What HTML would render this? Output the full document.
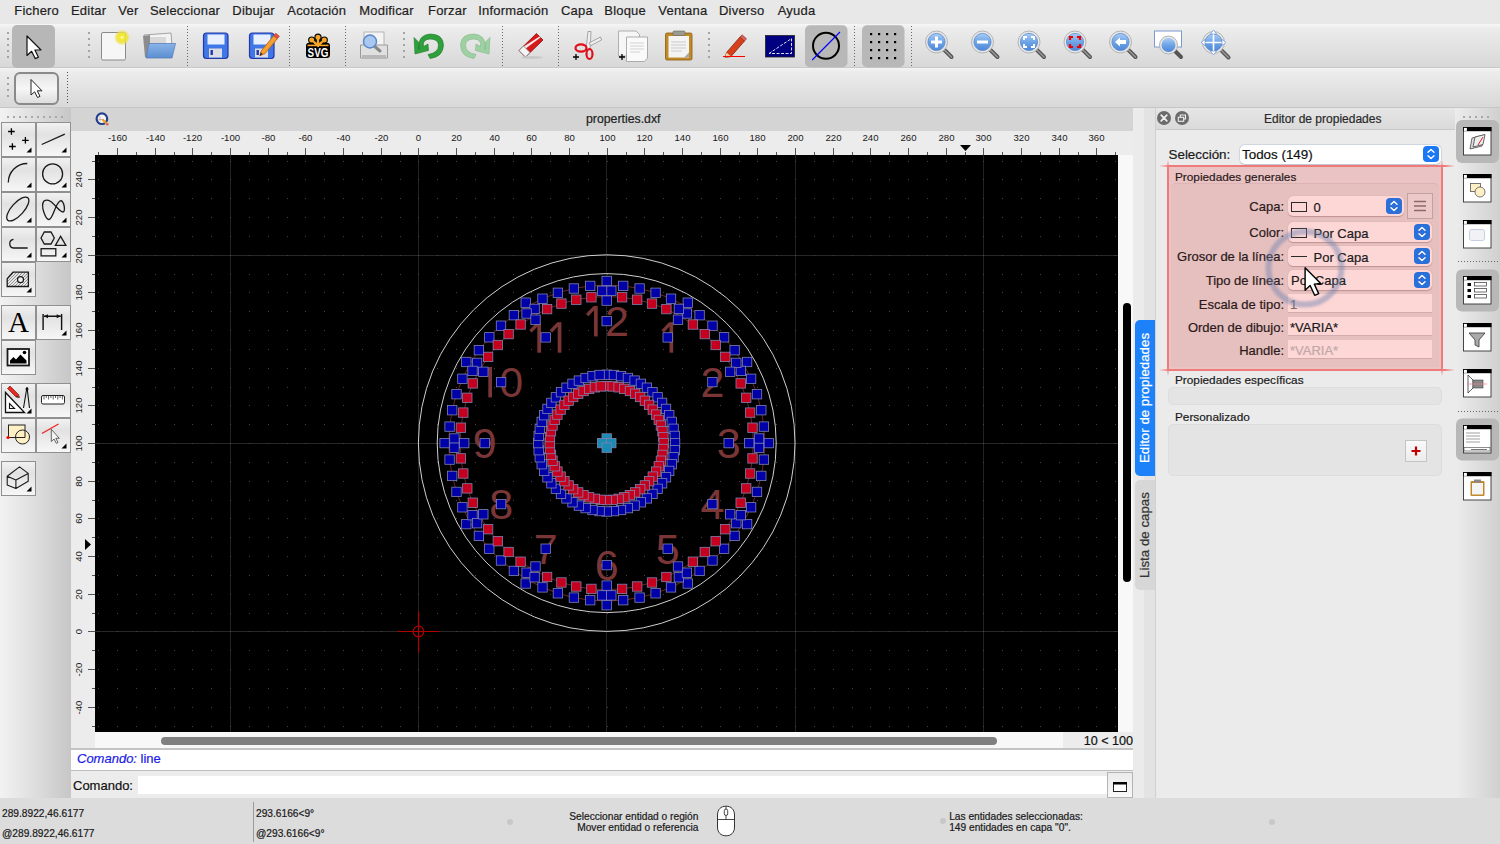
<!DOCTYPE html><html><head><meta charset="utf-8"><style>
*{box-sizing:border-box;margin:0;padding:0}
html,body{width:1500px;height:844px;overflow:hidden;background:#ececec;font-family:"Liberation Sans",sans-serif;color:#222}
.a{position:absolute}
.t{position:absolute;white-space:pre;line-height:1;-webkit-text-stroke:0.2px currentColor}
</style></head><body>
<div class="a" style="left:0;top:0;width:1500px;height:24px;background:#e8e8e8"></div>
<div class="t" style="left:14.3px;top:4px;font-size:13px;letter-spacing:0.2px;color:#1e1e1e">Fichero</div>
<div class="t" style="left:71px;top:4px;font-size:13px;letter-spacing:0.2px;color:#1e1e1e">Editar</div>
<div class="t" style="left:118.3px;top:4px;font-size:13px;letter-spacing:0.2px;color:#1e1e1e">Ver</div>
<div class="t" style="left:150px;top:4px;font-size:13px;letter-spacing:0.2px;color:#1e1e1e">Seleccionar</div>
<div class="t" style="left:232.3px;top:4px;font-size:13px;letter-spacing:0.2px;color:#1e1e1e">Dibujar</div>
<div class="t" style="left:287.3px;top:4px;font-size:13px;letter-spacing:0.2px;color:#1e1e1e">Acotación</div>
<div class="t" style="left:359.3px;top:4px;font-size:13px;letter-spacing:0.2px;color:#1e1e1e">Modificar</div>
<div class="t" style="left:428px;top:4px;font-size:13px;letter-spacing:0.2px;color:#1e1e1e">Forzar</div>
<div class="t" style="left:478.3px;top:4px;font-size:13px;letter-spacing:0.2px;color:#1e1e1e">Información</div>
<div class="t" style="left:561px;top:4px;font-size:13px;letter-spacing:0.2px;color:#1e1e1e">Capa</div>
<div class="t" style="left:604.3px;top:4px;font-size:13px;letter-spacing:0.2px;color:#1e1e1e">Bloque</div>
<div class="t" style="left:658.3px;top:4px;font-size:13px;letter-spacing:0.2px;color:#1e1e1e">Ventana</div>
<div class="t" style="left:719px;top:4px;font-size:13px;letter-spacing:0.2px;color:#1e1e1e">Diverso</div>
<div class="t" style="left:777.7px;top:4px;font-size:13px;letter-spacing:0.2px;color:#1e1e1e">Ayuda</div>
<div class="a" style="left:0;top:24px;width:1500px;height:44px;background:linear-gradient(#f6f6f6,#ececec 10%,#d8d8d8);border-bottom:1px solid #c9c9c9"></div>
<div class="a" style="left:0;top:68px;width:1500px;height:40px;background:linear-gradient(#f4f4f4,#ececec 10%,#d8d8d8);border-bottom:1px solid #c6c6c6"></div>
<svg class="a" style="left:0px;top:24px" width="1300" height="84" viewBox="0 24 1300 84"><defs><linearGradient id="lg" x1="0" y1="0" x2="0" y2="1"><stop offset="0" stop-color="#a9cdf5"/><stop offset="0.5" stop-color="#6ea4e6"/><stop offset="1" stop-color="#4d86d6"/></linearGradient><radialGradient id="glow"><stop offset="0" stop-color="#fffde0"/><stop offset="0.3" stop-color="#f4ea20"/><stop offset="0.7" stop-color="#eee040" stop-opacity="0.8"/><stop offset="1" stop-color="#eee040" stop-opacity="0"/></radialGradient><linearGradient id="fold" x1="0" y1="0" x2="0" y2="1"><stop offset="0" stop-color="#8ab4e8"/><stop offset="1" stop-color="#5a8ed0"/></linearGradient></defs><rect x="7" y="32" width="2" height="2" fill="#a4a4a4"/><rect x="7" y="38" width="2" height="2" fill="#a4a4a4"/><rect x="7" y="44" width="2" height="2" fill="#a4a4a4"/><rect x="7" y="50" width="2" height="2" fill="#a4a4a4"/><rect x="7" y="56" width="2" height="2" fill="#a4a4a4"/><rect x="12" y="25" width="43" height="43" rx="5" fill="#b7b7b7"/><path d="M27 36V55.5L31.6 51.3L35.2 58.6L38.4 57.2L34.9 50H41Z" fill="#fff" stroke="#111" stroke-width="1.2" stroke-linejoin="round"/><rect x="88" y="32" width="2" height="2" fill="#a4a4a4"/><rect x="88" y="38" width="2" height="2" fill="#a4a4a4"/><rect x="88" y="44" width="2" height="2" fill="#a4a4a4"/><rect x="88" y="50" width="2" height="2" fill="#a4a4a4"/><rect x="88" y="56" width="2" height="2" fill="#a4a4a4"/><rect x="101.5" y="32.5" width="24" height="27.5" rx="1.5" fill="#f6f6f6" stroke="#8a8a8a" stroke-width="1"/><circle cx="122" cy="37.5" r="8" fill="url(#glow)"/><path d="M144 35L171 33L172.5 53L147 56Z" fill="#f2f2f2" stroke="#909090" stroke-width="0.8"/><path d="M146 37H166V50H146Z" fill="#d8d8d8"/><path d="M143 36L150 35L150 57L145 57Z" fill="#8c8c8c"/><path d="M149 43.5H175.5L172 58H146Z" fill="url(#fold)" stroke="#5a7fb8" stroke-width="0.8"/><line x1="187.5" y1="26" x2="187.5" y2="66" stroke="#6a6a6a" stroke-width="1" stroke-dasharray="1 2"/><rect x="203.5" y="33" width="24.5" height="25.5" rx="3" fill="#3f78e6" stroke="#2436a8" stroke-width="1.2"/><rect x="207.5" y="34.5" width="17" height="10" fill="#e8f0ff"/><rect x="209.0" y="48.5" width="13" height="9" fill="#dcdce4"/><rect x="210.5" y="50" width="2.4" height="5" fill="#2436a8"/><rect x="249.5" y="33" width="24.5" height="25.5" rx="3" fill="#3f78e6" stroke="#2436a8" stroke-width="1.2"/><rect x="253.5" y="34.5" width="17" height="10" fill="#e8f0ff"/><rect x="255.0" y="48.5" width="13" height="9" fill="#dcdce4"/><rect x="256.5" y="50" width="2.4" height="5" fill="#2436a8"/><path d="M261.5 50.5L273.8 35.6L277.4 38.6L265.1 53.5L259.8 55.8Z" fill="#f5a030" stroke="#a85a18" stroke-width="0.8" stroke-linejoin="round"/><path d="M273.8 35.6L275.8 33.2L279.4 36.2L277.4 38.6Z" fill="#e85040" stroke="#a83020" stroke-width="0.6"/><path d="M259.8 55.8L260.8 52.6L262.6 54.1Z" fill="#222"/><line x1="289.5" y1="26" x2="289.5" y2="66" stroke="#6a6a6a" stroke-width="1" stroke-dasharray="1 2"/><rect x="306" y="42.8" width="24" height="15.2" rx="3.2" fill="#000"/><g stroke="#000" stroke-width="4.6" stroke-linecap="round"><line x1="318" y1="45" x2="311.7" y2="40"/><line x1="318" y1="45" x2="318" y2="37.2"/><line x1="318" y1="45" x2="324.3" y2="40"/></g><g stroke="#f6a728" stroke-width="2.2" stroke-linecap="round"><line x1="318" y1="45.5" x2="311.7" y2="40"/><line x1="318" y1="45.5" x2="318" y2="37.2"/><line x1="318" y1="45.5" x2="324.3" y2="40"/></g><g fill="#000"><circle cx="311.7" cy="40" r="3.6"/><circle cx="318" cy="37.2" r="3.6"/><circle cx="324.3" cy="40" r="3.6"/></g><g stroke="#f6a728" stroke-width="2.2" stroke-linecap="round"><line x1="318" y1="45.5" x2="311.7" y2="40"/><line x1="318" y1="45.5" x2="318" y2="37.2"/><line x1="318" y1="45.5" x2="324.3" y2="40"/></g><g fill="#f6a728"><circle cx="311.7" cy="40" r="2.5"/><circle cx="318" cy="37.2" r="2.5"/><circle cx="324.3" cy="40" r="2.5"/></g><path d="M307.5 45.4H328.5" stroke="#f6a728" stroke-width="1.6"/><text x="0" y="0" transform="translate(318 56.6) scale(0.82 1)" text-anchor="middle" style="font-family:&quot;Liberation Sans&quot;;font-weight:bold" font-size="12" fill="#fff">SVG</text><line x1="345.5" y1="26" x2="345.5" y2="66" stroke="#6a6a6a" stroke-width="1" stroke-dasharray="1 2"/><rect x="364" y="32" width="20" height="14" fill="#f4f4f4" stroke="#a8a8a8" stroke-width="0.8"/><path d="M360.5 45H387.5V58H360.5Z" fill="#e0e0e0" stroke="#9a9a9a" stroke-width="1" rx="2"/><rect x="362" y="55" width="24" height="3.5" fill="#b8b8b8"/><line x1="373" y1="45" x2="380" y2="51" stroke="#888" stroke-width="3" stroke-linecap="round"/><circle cx="370" cy="41.5" r="6.5" fill="#a8c8f0" stroke="#5a86c8" stroke-width="1.4"/><rect x="403" y="32" width="2" height="2" fill="#a4a4a4"/><rect x="403" y="38" width="2" height="2" fill="#a4a4a4"/><rect x="403" y="44" width="2" height="2" fill="#a4a4a4"/><rect x="403" y="50" width="2" height="2" fill="#a4a4a4"/><rect x="403" y="56" width="2" height="2" fill="#a4a4a4"/><path d="M419 50Q417 35 430 34Q443 34 443.5 45Q443 57 430 58.5L428 54.5Q438.5 53 438.5 45Q438 39 430 39Q422 39.5 423.5 46.5L428 44L428.5 50.5L415 54L414 37.5L418.5 42Z" fill="#2fa03c" stroke="#1e7a2a" stroke-width="0.6"/><path d="M485 50Q487 35 474 34Q461 34 460.5 45Q461 57 474 58.5L476 54.5Q465.5 53 465.5 45Q466 39 474 39Q482 39.5 480.5 46.5L476 44L475.5 50.5L489 54L490 37.5L485.5 42Z" fill="#9fd0a4" stroke="#7fb886" stroke-width="0.6"/><line x1="502.5" y1="26" x2="502.5" y2="66" stroke="#6a6a6a" stroke-width="1" stroke-dasharray="1 2"/><path d="M519 50.5L536.5 33.5L543 40L525.5 57Z" fill="#d61a1a" stroke="#8a1010" stroke-width="0.8"/><path d="M523 47L539.5 36.5L540.5 37.5L525 49Z" fill="#fff" opacity="0.9"/><path d="M519 50.5L523.5 46L530 52.5L525.5 57Z" fill="#f4f4f4" stroke="#888" stroke-width="0.8"/><ellipse cx="532" cy="57.5" rx="11" ry="1.5" fill="#c8c8c8"/><line x1="558.5" y1="26" x2="558.5" y2="66" stroke="#6a6a6a" stroke-width="1" stroke-dasharray="1 2"/><path d="M588 31.5L591 31.5L590 50L586 50Z" fill="#eee" stroke="#888" stroke-width="0.7"/><path d="M600.5 37L601.5 40L591 45.5L589 43Z" fill="#eee" stroke="#888" stroke-width="0.7"/><ellipse cx="581" cy="48" rx="5.5" ry="3.6" fill="none" stroke="#e0101a" stroke-width="2.2"/><ellipse cx="589.5" cy="54" rx="3" ry="5" fill="none" stroke="#e0101a" stroke-width="2.2"/><path d="M576 54V60M573 57H579" stroke="#000" stroke-width="1.3"/><path d="M618.5 31H636L639.5 34.5V56H618.5Z" fill="#f6f6f6" stroke="#a0a0a0" stroke-width="0.8"/><path d="M626.5 37H647.5V58L644.5 61.5H626.5Z" fill="#fafafa" stroke="#9a9a9a" stroke-width="0.8"/><path d="M630 43H644M630 46H644M630 49H644M630 52H640" stroke="#c8c8c8" stroke-width="0.8"/><path d="M622 54V60M619 57H625" stroke="#000" stroke-width="1.3"/><rect x="665.5" y="33" width="26.5" height="27" rx="1.5" fill="#c08a2a" stroke="#8a5a10" stroke-width="0.8"/><path d="M668.5 36H689V57.5H668.5Z" fill="#f4f4f4"/><path d="M671 42H686M671 45H686M671 48H686M671 51H682" stroke="#c0c0c0" stroke-width="0.8"/><path d="M684 57.5L689 52.5V57.5Z" fill="#a8a8a8"/><rect x="673" y="31" width="12" height="4.5" rx="1" fill="#9a9a90" stroke="#6a6a60" stroke-width="0.6"/><rect x="708" y="32" width="2" height="2" fill="#a4a4a4"/><rect x="708" y="38" width="2" height="2" fill="#a4a4a4"/><rect x="708" y="44" width="2" height="2" fill="#a4a4a4"/><rect x="708" y="50" width="2" height="2" fill="#a4a4a4"/><rect x="708" y="56" width="2" height="2" fill="#a4a4a4"/><path d="M726.5 52.5L740 37L744.5 41L731 56.5L725 57.5Z" fill="#d8401c" stroke="#7a2a10" stroke-width="0.8"/><path d="M740 37L742 34.8L746.5 38.8L744.5 41Z" fill="#e06060" stroke="#7a2a10" stroke-width="0.6"/><path d="M725 57.5L726.5 52.5L731 56.5Z" fill="#f0d0a0"/><line x1="723" y1="56.5" x2="745" y2="56.5" stroke="#f00" stroke-width="1"/><rect x="765.5" y="35.5" width="29" height="21.5" fill="#000080" stroke="#222" stroke-width="0.8"/><path d="M769 53.5L791.5 38.5V53.5Z" fill="none" stroke="#dde" stroke-width="1" stroke-dasharray="3 1.5"/><rect x="805" y="25.2" width="42.5" height="42" rx="5" fill="#b8b8b8"/><circle cx="826" cy="45.8" r="13" fill="none" stroke="#000" stroke-width="2"/><line x1="812.2" y1="60" x2="840" y2="32" stroke="#0000ff" stroke-width="1.1"/><line x1="854.5" y1="26" x2="854.5" y2="66" stroke="#6a6a6a" stroke-width="1" stroke-dasharray="1 2"/><rect x="862" y="25.2" width="42.5" height="42" rx="5" fill="#b8b8b8"/><rect x="870" y="33" width="2.2" height="2.2" fill="#000"/><rect x="870" y="41" width="2.2" height="2.2" fill="#000"/><rect x="870" y="49" width="2.2" height="2.2" fill="#000"/><rect x="870" y="57" width="2.2" height="2.2" fill="#000"/><rect x="878" y="33" width="2.2" height="2.2" fill="#000"/><rect x="878" y="41" width="2.2" height="2.2" fill="#000"/><rect x="878" y="49" width="2.2" height="2.2" fill="#000"/><rect x="878" y="57" width="2.2" height="2.2" fill="#000"/><rect x="886" y="33" width="2.2" height="2.2" fill="#000"/><rect x="886" y="41" width="2.2" height="2.2" fill="#000"/><rect x="886" y="49" width="2.2" height="2.2" fill="#000"/><rect x="886" y="57" width="2.2" height="2.2" fill="#000"/><rect x="894" y="33" width="2.2" height="2.2" fill="#000"/><rect x="894" y="41" width="2.2" height="2.2" fill="#000"/><rect x="894" y="49" width="2.2" height="2.2" fill="#000"/><rect x="894" y="57" width="2.2" height="2.2" fill="#000"/><line x1="911.5" y1="26" x2="911.5" y2="66" stroke="#6a6a6a" stroke-width="1" stroke-dasharray="1 2"/><line x1="943.5" y1="49" x2="951.5" y2="57" stroke="#555" stroke-width="4" stroke-linecap="round"/><line x1="943.5" y1="49" x2="951.5" y2="57" stroke="#999" stroke-width="1.5" stroke-linecap="round"/><circle cx="936.5" cy="42" r="11" fill="#e6e6e6" stroke="#b4b4b4" stroke-width="1"/><circle cx="936.5" cy="42" r="8.6" fill="url(#lg)" stroke="#5a8ad0" stroke-width="0.8"/><path d="M931 42H942M936.5 36.5V47.5" stroke="#fff" stroke-width="3"/><line x1="989.5" y1="49" x2="997.5" y2="57" stroke="#555" stroke-width="4" stroke-linecap="round"/><line x1="989.5" y1="49" x2="997.5" y2="57" stroke="#999" stroke-width="1.5" stroke-linecap="round"/><circle cx="982.5" cy="42" r="11" fill="#e6e6e6" stroke="#b4b4b4" stroke-width="1"/><circle cx="982.5" cy="42" r="8.6" fill="url(#lg)" stroke="#5a8ad0" stroke-width="0.8"/><path d="M977 42H988" stroke="#fff" stroke-width="3"/><line x1="1036" y1="49" x2="1044" y2="57" stroke="#555" stroke-width="4" stroke-linecap="round"/><line x1="1036" y1="49" x2="1044" y2="57" stroke="#999" stroke-width="1.5" stroke-linecap="round"/><circle cx="1029" cy="42" r="11" fill="#e6e6e6" stroke="#b4b4b4" stroke-width="1"/><circle cx="1029" cy="42" r="8.6" fill="url(#lg)" stroke="#5a8ad0" stroke-width="0.8"/><path d="M1024 40V37H1027M1031 37H1034V40M1034 44V47H1031M1027 47H1024V44" fill="none" stroke="#fff" stroke-width="1.8"/><line x1="1082" y1="49" x2="1090" y2="57" stroke="#555" stroke-width="4" stroke-linecap="round"/><line x1="1082" y1="49" x2="1090" y2="57" stroke="#999" stroke-width="1.5" stroke-linecap="round"/><circle cx="1075" cy="42" r="11" fill="#e6e6e6" stroke="#b4b4b4" stroke-width="1"/><circle cx="1075" cy="42" r="8.6" fill="url(#lg)" stroke="#5a8ad0" stroke-width="0.8"/><path d="M1070 40V37H1073M1077 37H1080V40M1080 44V47H1077M1073 47H1070V44" fill="none" stroke="#e00" stroke-width="2.2"/><line x1="1127.5" y1="49" x2="1135.5" y2="57" stroke="#555" stroke-width="4" stroke-linecap="round"/><line x1="1127.5" y1="49" x2="1135.5" y2="57" stroke="#999" stroke-width="1.5" stroke-linecap="round"/><circle cx="1120.5" cy="42" r="11" fill="#e6e6e6" stroke="#b4b4b4" stroke-width="1"/><circle cx="1120.5" cy="42" r="8.6" fill="url(#lg)" stroke="#5a8ad0" stroke-width="0.8"/><path d="M1115 42L1120 37.5V40H1126V44H1120V46.5Z" fill="#fff"/><rect x="1154.5" y="31" width="27" height="16" fill="#fff" stroke="#7a9ad0" stroke-width="1"/><line x1="1174" y1="50" x2="1181" y2="57" stroke="#555" stroke-width="4" stroke-linecap="round"/><circle cx="1168.5" cy="45" r="9" fill="#e6e6e6" stroke="#b4b4b4" stroke-width="1"/><circle cx="1168.5" cy="45" r="7" fill="url(#lg)"/><line x1="1220.5" y1="49.5" x2="1228.5" y2="57.5" stroke="#555" stroke-width="4" stroke-linecap="round"/><line x1="1220.5" y1="49.5" x2="1228.5" y2="57.5" stroke="#999" stroke-width="1.5" stroke-linecap="round"/><circle cx="1213.5" cy="42.5" r="11" fill="#e6e6e6" stroke="#b4b4b4" stroke-width="1"/><circle cx="1213.5" cy="42.5" r="8.6" fill="url(#lg)" stroke="#5a8ad0" stroke-width="0.8"/><path d="M1213.5 31V54M1202 42.5H1225" stroke="#fff" stroke-width="1.6"/><path d="M1213.5 30L1210.5 34H1216.5ZM1213.5 55L1210.5 51H1216.5ZM1201 42.5L1205 39.5V45.5ZM1226 42.5L1222 39.5V45.5Z" fill="#fff" stroke="#5a8ad0" stroke-width="0.6"/><rect x="7" y="77" width="2" height="2" fill="#a4a4a4"/><rect x="7" y="83" width="2" height="2" fill="#a4a4a4"/><rect x="7" y="89" width="2" height="2" fill="#a4a4a4"/><rect x="7" y="95" width="2" height="2" fill="#a4a4a4"/><rect x="15" y="73" width="43" height="31" rx="5" fill="url(#btn2)" stroke="#8a8a8a" stroke-width="2"/><defs><linearGradient id="btn2" x1="0" y1="0" x2="0" y2="1"><stop offset="0" stop-color="#e4e4e4"/><stop offset="0.5" stop-color="#f6f6f6"/><stop offset="1" stop-color="#dcdcdc"/></linearGradient></defs><path d="M31 79.5V95L34.6 91.8L37.5 97.5L40 96.4L37.3 90.8H42Z" fill="#fff" stroke="#222" stroke-width="1" stroke-linejoin="round"/><line x1="67.5" y1="72" x2="67.5" y2="105" stroke="#555" stroke-width="1" stroke-dasharray="1 2"/></svg>
<div class="a" style="left:0;top:108px;width:72px;height:690px;background:linear-gradient(90deg,#f2f2f2,#e6e6e6 30%,#c6c6c6)"></div>
<svg class="a" style="left:0px;top:108px" width="71" height="400" viewBox="0 108 71 400"><defs><linearGradient id="cellg" x1="0" y1="0" x2="0" y2="1"><stop offset="0" stop-color="#f2f2f2"/><stop offset="0.35" stop-color="#e2e2e2"/><stop offset="1" stop-color="#f7f7f7"/></linearGradient></defs><rect x="7" y="116" width="2" height="2" fill="#a8a8a8"/><rect x="13" y="116" width="2" height="2" fill="#a8a8a8"/><rect x="19" y="116" width="2" height="2" fill="#a8a8a8"/><rect x="25" y="116" width="2" height="2" fill="#a8a8a8"/><rect x="31" y="116" width="2" height="2" fill="#a8a8a8"/><rect x="37" y="116" width="2" height="2" fill="#a8a8a8"/><rect x="43" y="116" width="2" height="2" fill="#a8a8a8"/><rect x="49" y="116" width="2" height="2" fill="#a8a8a8"/><rect x="55" y="116" width="2" height="2" fill="#a8a8a8"/><rect x="61" y="116" width="2" height="2" fill="#a8a8a8"/><rect x="1.5" y="122.5" width="34" height="34" fill="url(#cellg)" stroke="#909090" stroke-width="1"/><rect x="36.5" y="122.5" width="34" height="34" fill="url(#cellg)" stroke="#909090" stroke-width="1"/><rect x="1.5" y="157.5" width="34" height="34" fill="url(#cellg)" stroke="#909090" stroke-width="1"/><rect x="36.5" y="157.5" width="34" height="34" fill="url(#cellg)" stroke="#909090" stroke-width="1"/><rect x="1.5" y="192.5" width="34" height="34" fill="url(#cellg)" stroke="#909090" stroke-width="1"/><rect x="36.5" y="192.5" width="34" height="34" fill="url(#cellg)" stroke="#909090" stroke-width="1"/><rect x="1.5" y="227.5" width="34" height="34" fill="url(#cellg)" stroke="#909090" stroke-width="1"/><rect x="36.5" y="227.5" width="34" height="34" fill="url(#cellg)" stroke="#909090" stroke-width="1"/><rect x="1.5" y="262.5" width="34" height="34" fill="url(#cellg)" stroke="#909090" stroke-width="1"/><path d="M8.100000000000001 131.5h6.6M11.4 128.2v6.6" stroke="#000" stroke-width="1.3"/><path d="M22.099999999999998 140.3h6.6M25.4 137.0v6.6" stroke="#000" stroke-width="1.3"/><path d="M9.100000000000001 146.5h6.6M12.4 143.2v6.6" stroke="#000" stroke-width="1.3"/><path d="M31.5 147.5V152.5H26.5Z" fill="#000"/><line x1="41.7" y1="144.5" x2="64.8" y2="134.1" stroke="#1a1a1a" stroke-width="1.3"/><path d="M66.5 147.5V152.5H61.5Z" fill="#000"/><path d="M8.3 182.5A19 19 0 0 1 27.3 163.5" fill="none" stroke="#1a1a1a" stroke-width="1.3"/><path d="M31.5 182.5V187.5H26.5Z" fill="#000"/><circle cx="52.6" cy="173.9" r="10" fill="none" stroke="#1a1a1a" stroke-width="1.3"/><path d="M66.5 182.5V187.5H61.5Z" fill="#000"/><ellipse cx="17.8" cy="209" rx="15" ry="6.2" transform="rotate(-48 17.8 209)" fill="none" stroke="#1a1a1a" stroke-width="1.3"/><path d="M31.5 217.5V222.5H26.5Z" fill="#000"/><path d="M44 201C40 206 46 220 49 219.5C53 219 55 204 60 201C64 199 66 212 63 212C58 212 51 196 44 201Z" fill="none" stroke="#1a1a1a" stroke-width="1.3"/><path d="M66.5 217.5V222.5H61.5Z" fill="#000"/><path d="M13.5 239.3A4.4 4.4 0 0 0 13.5 248H27.7" fill="none" stroke="#1a1a1a" stroke-width="1.3"/><path d="M31.5 252.5V257.5H26.5Z" fill="#000"/><path d="M41 238L44.3 232H51L54.3 238L51 244H44.3Z" fill="none" stroke="#1a1a1a" stroke-width="1.3"/><path d="M55.4 245.4H65.9L60.6 236.3Z" fill="none" stroke="#1a1a1a" stroke-width="1.3"/><rect x="41.1" y="248.7" width="14.7" height="7.2" fill="none" stroke="#1a1a1a" stroke-width="1.3"/><path d="M66.5 252.5V257.5H61.5Z" fill="#000"/><defs><clipPath id="hc"><path d="M7.2 286.5V278.7L13 272.2H28.4V286.5Z"/></clipPath></defs><g clip-path="url(#hc)"><line x1="-5" y1="288" x2="12" y2="271" stroke="#555" stroke-width="0.6"/><line x1="-2" y1="288" x2="15" y2="271" stroke="#555" stroke-width="0.6"/><line x1="1" y1="288" x2="18" y2="271" stroke="#555" stroke-width="0.6"/><line x1="4" y1="288" x2="21" y2="271" stroke="#555" stroke-width="0.6"/><line x1="7" y1="288" x2="24" y2="271" stroke="#555" stroke-width="0.6"/><line x1="10" y1="288" x2="27" y2="271" stroke="#555" stroke-width="0.6"/><line x1="13" y1="288" x2="30" y2="271" stroke="#555" stroke-width="0.6"/><line x1="16" y1="288" x2="33" y2="271" stroke="#555" stroke-width="0.6"/><line x1="19" y1="288" x2="36" y2="271" stroke="#555" stroke-width="0.6"/><line x1="22" y1="288" x2="39" y2="271" stroke="#555" stroke-width="0.6"/><line x1="25" y1="288" x2="42" y2="271" stroke="#555" stroke-width="0.6"/><line x1="28" y1="288" x2="45" y2="271" stroke="#555" stroke-width="0.6"/></g><path d="M7.2 286.5V278.7L13 272.2H28.4V286.5Z" fill="none" stroke="#1a1a1a" stroke-width="1.3"/><circle cx="20.5" cy="279.7" r="3" fill="#f0f0f0" stroke="#1a1a1a" stroke-width="1.2"/><path d="M31.5 287.5V292.5H26.5Z" fill="#000"/><rect x="1.5" y="305.5" width="34" height="34" fill="url(#cellg)" stroke="#909090" stroke-width="1"/><rect x="36.5" y="305.5" width="34" height="34" fill="url(#cellg)" stroke="#909090" stroke-width="1"/><rect x="1.5" y="340.5" width="34" height="34" fill="url(#cellg)" stroke="#909090" stroke-width="1"/><text x="18.5" y="331.8" text-anchor="middle" style="font-family:&quot;Liberation Serif&quot;" font-size="29" fill="#000">A</text><path d="M43.1 314V330M61.6 314V330M44 316.3H60.7" fill="none" stroke="#111" stroke-width="1.4"/><path d="M44 316.3L48 314.3V318.3ZM60.7 316.3L56.7 314.3V318.3Z" fill="#111"/><path d="M66.5 330.5V335.5H61.5Z" fill="#000"/><rect x="7.5" y="349" width="21.5" height="16.5" fill="#fff" stroke="#1a1a1a" stroke-width="1.8"/><path d="M10 363.5V360.5L13.5 357L16 359.5L20.5 354.5L26.5 360.5V363.5Z" fill="#000"/><circle cx="24.5" cy="352.5" r="1.8" fill="#000"/><rect x="1.5" y="383.5" width="34" height="34" fill="url(#cellg)" stroke="#909090" stroke-width="1"/><rect x="36.5" y="383.5" width="34" height="34" fill="url(#cellg)" stroke="#909090" stroke-width="1"/><rect x="1.5" y="418.5" width="34" height="34" fill="url(#cellg)" stroke="#909090" stroke-width="1"/><rect x="36.5" y="418.5" width="34" height="34" fill="url(#cellg)" stroke="#909090" stroke-width="1"/><path d="M5.5 412.5V392.5L24.5 412.5Z" fill="#fff" stroke="#111" stroke-width="1.3"/><path d="M9.5 408.5V403.5L14.5 408.5Z" fill="none" stroke="#111" stroke-width="1.1"/><path d="M7.5 388.5L10 386L18.5 394.5L19.5 397.5L16 397Z" fill="#e52a20" stroke="#7a1a10" stroke-width="0.7" stroke-linejoin="round"/><path d="M16.8 395.6L19.5 397.5L16 397Z" fill="#333"/><path d="M27 387L23.5 408M27 387L29.5 408" fill="none" stroke="#111" stroke-width="1.1"/><circle cx="27" cy="389" r="1.5" fill="#111"/><path d="M31.5 408.5V413.5H26.5Z" fill="#000"/><rect x="41.5" y="395.5" width="23" height="8.5" rx="1.5" fill="#fff" stroke="#222" stroke-width="1"/><line x1="44.0" y1="396" x2="44.0" y2="399.5" stroke="#222" stroke-width="0.7"/><line x1="46.3" y1="396" x2="46.3" y2="398" stroke="#222" stroke-width="0.7"/><line x1="48.6" y1="396" x2="48.6" y2="399.5" stroke="#222" stroke-width="0.7"/><line x1="50.9" y1="396" x2="50.9" y2="398" stroke="#222" stroke-width="0.7"/><line x1="53.2" y1="396" x2="53.2" y2="399.5" stroke="#222" stroke-width="0.7"/><line x1="55.5" y1="396" x2="55.5" y2="398" stroke="#222" stroke-width="0.7"/><line x1="57.8" y1="396" x2="57.8" y2="399.5" stroke="#222" stroke-width="0.7"/><line x1="60.1" y1="396" x2="60.1" y2="398" stroke="#222" stroke-width="0.7"/><line x1="62.4" y1="396" x2="62.4" y2="399.5" stroke="#222" stroke-width="0.7"/><rect x="8.5" y="425" width="16.5" height="12.5" fill="#fdf0c4" stroke="#222" stroke-width="1"/><circle cx="22.5" cy="437" r="7" fill="#fdf0c4" stroke="#222" stroke-width="1"/><path d="M15.5 437.5H25V430.3" fill="none" stroke="#222" stroke-width="1"/><circle cx="8" cy="437.5" r="1.6" fill="#f00"/><line x1="41.9" y1="433.6" x2="58.5" y2="424" stroke="#f02020" stroke-width="1.2"/><path d="M51.3 429.3V441.5L54 439L56.3 443.3L58 442.5L55.8 438.3H59.3Z" fill="#f4f4f4" stroke="#444" stroke-width="0.8" stroke-linejoin="round"/><path d="M66.5 443.5V448.5H61.5Z" fill="#000"/><rect x="1.5" y="461.5" width="34" height="34" fill="url(#cellg)" stroke="#909090" stroke-width="1"/><path d="M7.2 476.3L19.5 466.9L28.2 473.4L15.9 479.9Z M7.2 476.3V484.9L15.9 488.5L28.2 481.3V473.4 M15.9 479.9V488.5" fill="none" stroke="#1a1a1a" stroke-width="1.1" stroke-linejoin="round"/><path d="M31.5 486.5V491.5H26.5Z" fill="#000"/></svg>
<div class="a" style="left:71px;top:108px;width:1063px;height:23px;background:#d4d4d4"></div>
<div class="t" style="left:586px;top:113px;font-size:12.3px;color:#222">properties.dxf</div>
<svg class="a" style="left:94px;top:111px" width="16" height="16"><circle cx="7.9" cy="7.7" r="5.3" fill="#f4f4f4" stroke="#25408a" stroke-width="2.2"/><path d="M6 5.5V10M4.5 8.5H10" stroke="#c9a0a0" stroke-width="0.8"/><line x1="8.5" y1="8.5" x2="13" y2="13" stroke="#f0a020" stroke-width="2.2"/><circle cx="13.3" cy="13.3" r="1.3" fill="#e06060"/></svg>
<div class="a" style="left:71px;top:131px;width:1062px;height:24px;background:#ececec"></div>
<div class="a" style="left:71px;top:155px;width:24px;height:593px;background:#ececec"></div>
<svg class="a" style="left:95px;top:155px" width="1023" height="577" viewBox="95 155 1023 577">
<rect x="95" y="155" width="1023" height="577" fill="#000"/>
<line x1="230.5" y1="155" x2="230.5" y2="732" stroke="#222" stroke-width="1"/>
<line x1="418.5" y1="155" x2="418.5" y2="732" stroke="#222" stroke-width="1"/>
<line x1="606.5" y1="155" x2="606.5" y2="732" stroke="#222" stroke-width="1"/>
<line x1="795.5" y1="155" x2="795.5" y2="732" stroke="#222" stroke-width="1"/>
<line x1="983.5" y1="155" x2="983.5" y2="732" stroke="#222" stroke-width="1"/>
<line x1="95" y1="631.5" x2="1118" y2="631.5" stroke="#282828" stroke-width="1"/>
<line x1="95" y1="443.5" x2="1118" y2="443.5" stroke="#282828" stroke-width="1"/>
<line x1="95" y1="255.5" x2="1118" y2="255.5" stroke="#282828" stroke-width="1"/>
<path d="M98 726h1v1h-1zM98 707h1v1h-1zM98 688h1v1h-1zM98 669h1v1h-1zM98 650h1v1h-1zM98 631h1v1h-1zM98 613h1v1h-1zM98 594h1v1h-1zM98 575h1v1h-1zM98 556h1v1h-1zM98 537h1v1h-1zM98 518h1v1h-1zM98 500h1v1h-1zM98 481h1v1h-1zM98 462h1v1h-1zM98 443h1v1h-1zM98 424h1v1h-1zM98 405h1v1h-1zM98 387h1v1h-1zM98 368h1v1h-1zM98 349h1v1h-1zM98 330h1v1h-1zM98 311h1v1h-1zM98 292h1v1h-1zM98 274h1v1h-1zM98 255h1v1h-1zM98 236h1v1h-1zM98 217h1v1h-1zM98 198h1v1h-1zM98 179h1v1h-1zM98 161h1v1h-1zM117 726h1v1h-1zM117 707h1v1h-1zM117 688h1v1h-1zM117 669h1v1h-1zM117 650h1v1h-1zM117 631h1v1h-1zM117 613h1v1h-1zM117 594h1v1h-1zM117 575h1v1h-1zM117 556h1v1h-1zM117 537h1v1h-1zM117 518h1v1h-1zM117 500h1v1h-1zM117 481h1v1h-1zM117 462h1v1h-1zM117 443h1v1h-1zM117 424h1v1h-1zM117 405h1v1h-1zM117 387h1v1h-1zM117 368h1v1h-1zM117 349h1v1h-1zM117 330h1v1h-1zM117 311h1v1h-1zM117 292h1v1h-1zM117 274h1v1h-1zM117 255h1v1h-1zM117 236h1v1h-1zM117 217h1v1h-1zM117 198h1v1h-1zM117 179h1v1h-1zM117 161h1v1h-1zM136 726h1v1h-1zM136 707h1v1h-1zM136 688h1v1h-1zM136 669h1v1h-1zM136 650h1v1h-1zM136 631h1v1h-1zM136 613h1v1h-1zM136 594h1v1h-1zM136 575h1v1h-1zM136 556h1v1h-1zM136 537h1v1h-1zM136 518h1v1h-1zM136 500h1v1h-1zM136 481h1v1h-1zM136 462h1v1h-1zM136 443h1v1h-1zM136 424h1v1h-1zM136 405h1v1h-1zM136 387h1v1h-1zM136 368h1v1h-1zM136 349h1v1h-1zM136 330h1v1h-1zM136 311h1v1h-1zM136 292h1v1h-1zM136 274h1v1h-1zM136 255h1v1h-1zM136 236h1v1h-1zM136 217h1v1h-1zM136 198h1v1h-1zM136 179h1v1h-1zM136 161h1v1h-1zM155 726h1v1h-1zM155 707h1v1h-1zM155 688h1v1h-1zM155 669h1v1h-1zM155 650h1v1h-1zM155 631h1v1h-1zM155 613h1v1h-1zM155 594h1v1h-1zM155 575h1v1h-1zM155 556h1v1h-1zM155 537h1v1h-1zM155 518h1v1h-1zM155 500h1v1h-1zM155 481h1v1h-1zM155 462h1v1h-1zM155 443h1v1h-1zM155 424h1v1h-1zM155 405h1v1h-1zM155 387h1v1h-1zM155 368h1v1h-1zM155 349h1v1h-1zM155 330h1v1h-1zM155 311h1v1h-1zM155 292h1v1h-1zM155 274h1v1h-1zM155 255h1v1h-1zM155 236h1v1h-1zM155 217h1v1h-1zM155 198h1v1h-1zM155 179h1v1h-1zM155 161h1v1h-1zM174 726h1v1h-1zM174 707h1v1h-1zM174 688h1v1h-1zM174 669h1v1h-1zM174 650h1v1h-1zM174 631h1v1h-1zM174 613h1v1h-1zM174 594h1v1h-1zM174 575h1v1h-1zM174 556h1v1h-1zM174 537h1v1h-1zM174 518h1v1h-1zM174 500h1v1h-1zM174 481h1v1h-1zM174 462h1v1h-1zM174 443h1v1h-1zM174 424h1v1h-1zM174 405h1v1h-1zM174 387h1v1h-1zM174 368h1v1h-1zM174 349h1v1h-1zM174 330h1v1h-1zM174 311h1v1h-1zM174 292h1v1h-1zM174 274h1v1h-1zM174 255h1v1h-1zM174 236h1v1h-1zM174 217h1v1h-1zM174 198h1v1h-1zM174 179h1v1h-1zM174 161h1v1h-1zM192 726h1v1h-1zM192 707h1v1h-1zM192 688h1v1h-1zM192 669h1v1h-1zM192 650h1v1h-1zM192 631h1v1h-1zM192 613h1v1h-1zM192 594h1v1h-1zM192 575h1v1h-1zM192 556h1v1h-1zM192 537h1v1h-1zM192 518h1v1h-1zM192 500h1v1h-1zM192 481h1v1h-1zM192 462h1v1h-1zM192 443h1v1h-1zM192 424h1v1h-1zM192 405h1v1h-1zM192 387h1v1h-1zM192 368h1v1h-1zM192 349h1v1h-1zM192 330h1v1h-1zM192 311h1v1h-1zM192 292h1v1h-1zM192 274h1v1h-1zM192 255h1v1h-1zM192 236h1v1h-1zM192 217h1v1h-1zM192 198h1v1h-1zM192 179h1v1h-1zM192 161h1v1h-1zM211 726h1v1h-1zM211 707h1v1h-1zM211 688h1v1h-1zM211 669h1v1h-1zM211 650h1v1h-1zM211 631h1v1h-1zM211 613h1v1h-1zM211 594h1v1h-1zM211 575h1v1h-1zM211 556h1v1h-1zM211 537h1v1h-1zM211 518h1v1h-1zM211 500h1v1h-1zM211 481h1v1h-1zM211 462h1v1h-1zM211 443h1v1h-1zM211 424h1v1h-1zM211 405h1v1h-1zM211 387h1v1h-1zM211 368h1v1h-1zM211 349h1v1h-1zM211 330h1v1h-1zM211 311h1v1h-1zM211 292h1v1h-1zM211 274h1v1h-1zM211 255h1v1h-1zM211 236h1v1h-1zM211 217h1v1h-1zM211 198h1v1h-1zM211 179h1v1h-1zM211 161h1v1h-1zM230 726h1v1h-1zM230 707h1v1h-1zM230 688h1v1h-1zM230 669h1v1h-1zM230 650h1v1h-1zM230 631h1v1h-1zM230 613h1v1h-1zM230 594h1v1h-1zM230 575h1v1h-1zM230 556h1v1h-1zM230 537h1v1h-1zM230 518h1v1h-1zM230 500h1v1h-1zM230 481h1v1h-1zM230 462h1v1h-1zM230 443h1v1h-1zM230 424h1v1h-1zM230 405h1v1h-1zM230 387h1v1h-1zM230 368h1v1h-1zM230 349h1v1h-1zM230 330h1v1h-1zM230 311h1v1h-1zM230 292h1v1h-1zM230 274h1v1h-1zM230 255h1v1h-1zM230 236h1v1h-1zM230 217h1v1h-1zM230 198h1v1h-1zM230 179h1v1h-1zM230 161h1v1h-1zM249 726h1v1h-1zM249 707h1v1h-1zM249 688h1v1h-1zM249 669h1v1h-1zM249 650h1v1h-1zM249 631h1v1h-1zM249 613h1v1h-1zM249 594h1v1h-1zM249 575h1v1h-1zM249 556h1v1h-1zM249 537h1v1h-1zM249 518h1v1h-1zM249 500h1v1h-1zM249 481h1v1h-1zM249 462h1v1h-1zM249 443h1v1h-1zM249 424h1v1h-1zM249 405h1v1h-1zM249 387h1v1h-1zM249 368h1v1h-1zM249 349h1v1h-1zM249 330h1v1h-1zM249 311h1v1h-1zM249 292h1v1h-1zM249 274h1v1h-1zM249 255h1v1h-1zM249 236h1v1h-1zM249 217h1v1h-1zM249 198h1v1h-1zM249 179h1v1h-1zM249 161h1v1h-1zM268 726h1v1h-1zM268 707h1v1h-1zM268 688h1v1h-1zM268 669h1v1h-1zM268 650h1v1h-1zM268 631h1v1h-1zM268 613h1v1h-1zM268 594h1v1h-1zM268 575h1v1h-1zM268 556h1v1h-1zM268 537h1v1h-1zM268 518h1v1h-1zM268 500h1v1h-1zM268 481h1v1h-1zM268 462h1v1h-1zM268 443h1v1h-1zM268 424h1v1h-1zM268 405h1v1h-1zM268 387h1v1h-1zM268 368h1v1h-1zM268 349h1v1h-1zM268 330h1v1h-1zM268 311h1v1h-1zM268 292h1v1h-1zM268 274h1v1h-1zM268 255h1v1h-1zM268 236h1v1h-1zM268 217h1v1h-1zM268 198h1v1h-1zM268 179h1v1h-1zM268 161h1v1h-1zM287 726h1v1h-1zM287 707h1v1h-1zM287 688h1v1h-1zM287 669h1v1h-1zM287 650h1v1h-1zM287 631h1v1h-1zM287 613h1v1h-1zM287 594h1v1h-1zM287 575h1v1h-1zM287 556h1v1h-1zM287 537h1v1h-1zM287 518h1v1h-1zM287 500h1v1h-1zM287 481h1v1h-1zM287 462h1v1h-1zM287 443h1v1h-1zM287 424h1v1h-1zM287 405h1v1h-1zM287 387h1v1h-1zM287 368h1v1h-1zM287 349h1v1h-1zM287 330h1v1h-1zM287 311h1v1h-1zM287 292h1v1h-1zM287 274h1v1h-1zM287 255h1v1h-1zM287 236h1v1h-1zM287 217h1v1h-1zM287 198h1v1h-1zM287 179h1v1h-1zM287 161h1v1h-1zM305 726h1v1h-1zM305 707h1v1h-1zM305 688h1v1h-1zM305 669h1v1h-1zM305 650h1v1h-1zM305 631h1v1h-1zM305 613h1v1h-1zM305 594h1v1h-1zM305 575h1v1h-1zM305 556h1v1h-1zM305 537h1v1h-1zM305 518h1v1h-1zM305 500h1v1h-1zM305 481h1v1h-1zM305 462h1v1h-1zM305 443h1v1h-1zM305 424h1v1h-1zM305 405h1v1h-1zM305 387h1v1h-1zM305 368h1v1h-1zM305 349h1v1h-1zM305 330h1v1h-1zM305 311h1v1h-1zM305 292h1v1h-1zM305 274h1v1h-1zM305 255h1v1h-1zM305 236h1v1h-1zM305 217h1v1h-1zM305 198h1v1h-1zM305 179h1v1h-1zM305 161h1v1h-1zM324 726h1v1h-1zM324 707h1v1h-1zM324 688h1v1h-1zM324 669h1v1h-1zM324 650h1v1h-1zM324 631h1v1h-1zM324 613h1v1h-1zM324 594h1v1h-1zM324 575h1v1h-1zM324 556h1v1h-1zM324 537h1v1h-1zM324 518h1v1h-1zM324 500h1v1h-1zM324 481h1v1h-1zM324 462h1v1h-1zM324 443h1v1h-1zM324 424h1v1h-1zM324 405h1v1h-1zM324 387h1v1h-1zM324 368h1v1h-1zM324 349h1v1h-1zM324 330h1v1h-1zM324 311h1v1h-1zM324 292h1v1h-1zM324 274h1v1h-1zM324 255h1v1h-1zM324 236h1v1h-1zM324 217h1v1h-1zM324 198h1v1h-1zM324 179h1v1h-1zM324 161h1v1h-1zM343 726h1v1h-1zM343 707h1v1h-1zM343 688h1v1h-1zM343 669h1v1h-1zM343 650h1v1h-1zM343 631h1v1h-1zM343 613h1v1h-1zM343 594h1v1h-1zM343 575h1v1h-1zM343 556h1v1h-1zM343 537h1v1h-1zM343 518h1v1h-1zM343 500h1v1h-1zM343 481h1v1h-1zM343 462h1v1h-1zM343 443h1v1h-1zM343 424h1v1h-1zM343 405h1v1h-1zM343 387h1v1h-1zM343 368h1v1h-1zM343 349h1v1h-1zM343 330h1v1h-1zM343 311h1v1h-1zM343 292h1v1h-1zM343 274h1v1h-1zM343 255h1v1h-1zM343 236h1v1h-1zM343 217h1v1h-1zM343 198h1v1h-1zM343 179h1v1h-1zM343 161h1v1h-1zM362 726h1v1h-1zM362 707h1v1h-1zM362 688h1v1h-1zM362 669h1v1h-1zM362 650h1v1h-1zM362 631h1v1h-1zM362 613h1v1h-1zM362 594h1v1h-1zM362 575h1v1h-1zM362 556h1v1h-1zM362 537h1v1h-1zM362 518h1v1h-1zM362 500h1v1h-1zM362 481h1v1h-1zM362 462h1v1h-1zM362 443h1v1h-1zM362 424h1v1h-1zM362 405h1v1h-1zM362 387h1v1h-1zM362 368h1v1h-1zM362 349h1v1h-1zM362 330h1v1h-1zM362 311h1v1h-1zM362 292h1v1h-1zM362 274h1v1h-1zM362 255h1v1h-1zM362 236h1v1h-1zM362 217h1v1h-1zM362 198h1v1h-1zM362 179h1v1h-1zM362 161h1v1h-1zM381 726h1v1h-1zM381 707h1v1h-1zM381 688h1v1h-1zM381 669h1v1h-1zM381 650h1v1h-1zM381 631h1v1h-1zM381 613h1v1h-1zM381 594h1v1h-1zM381 575h1v1h-1zM381 556h1v1h-1zM381 537h1v1h-1zM381 518h1v1h-1zM381 500h1v1h-1zM381 481h1v1h-1zM381 462h1v1h-1zM381 443h1v1h-1zM381 424h1v1h-1zM381 405h1v1h-1zM381 387h1v1h-1zM381 368h1v1h-1zM381 349h1v1h-1zM381 330h1v1h-1zM381 311h1v1h-1zM381 292h1v1h-1zM381 274h1v1h-1zM381 255h1v1h-1zM381 236h1v1h-1zM381 217h1v1h-1zM381 198h1v1h-1zM381 179h1v1h-1zM381 161h1v1h-1zM400 726h1v1h-1zM400 707h1v1h-1zM400 688h1v1h-1zM400 669h1v1h-1zM400 650h1v1h-1zM400 631h1v1h-1zM400 613h1v1h-1zM400 594h1v1h-1zM400 575h1v1h-1zM400 556h1v1h-1zM400 537h1v1h-1zM400 518h1v1h-1zM400 500h1v1h-1zM400 481h1v1h-1zM400 462h1v1h-1zM400 443h1v1h-1zM400 424h1v1h-1zM400 405h1v1h-1zM400 387h1v1h-1zM400 368h1v1h-1zM400 349h1v1h-1zM400 330h1v1h-1zM400 311h1v1h-1zM400 292h1v1h-1zM400 274h1v1h-1zM400 255h1v1h-1zM400 236h1v1h-1zM400 217h1v1h-1zM400 198h1v1h-1zM400 179h1v1h-1zM400 161h1v1h-1zM418 726h1v1h-1zM418 707h1v1h-1zM418 688h1v1h-1zM418 669h1v1h-1zM418 650h1v1h-1zM418 631h1v1h-1zM418 613h1v1h-1zM418 594h1v1h-1zM418 575h1v1h-1zM418 556h1v1h-1zM418 537h1v1h-1zM418 518h1v1h-1zM418 500h1v1h-1zM418 481h1v1h-1zM418 462h1v1h-1zM418 443h1v1h-1zM418 424h1v1h-1zM418 405h1v1h-1zM418 387h1v1h-1zM418 368h1v1h-1zM418 349h1v1h-1zM418 330h1v1h-1zM418 311h1v1h-1zM418 292h1v1h-1zM418 274h1v1h-1zM418 255h1v1h-1zM418 236h1v1h-1zM418 217h1v1h-1zM418 198h1v1h-1zM418 179h1v1h-1zM418 161h1v1h-1zM437 726h1v1h-1zM437 707h1v1h-1zM437 688h1v1h-1zM437 669h1v1h-1zM437 650h1v1h-1zM437 631h1v1h-1zM437 613h1v1h-1zM437 594h1v1h-1zM437 575h1v1h-1zM437 556h1v1h-1zM437 537h1v1h-1zM437 518h1v1h-1zM437 500h1v1h-1zM437 481h1v1h-1zM437 462h1v1h-1zM437 443h1v1h-1zM437 424h1v1h-1zM437 405h1v1h-1zM437 387h1v1h-1zM437 368h1v1h-1zM437 349h1v1h-1zM437 330h1v1h-1zM437 311h1v1h-1zM437 292h1v1h-1zM437 274h1v1h-1zM437 255h1v1h-1zM437 236h1v1h-1zM437 217h1v1h-1zM437 198h1v1h-1zM437 179h1v1h-1zM437 161h1v1h-1zM456 726h1v1h-1zM456 707h1v1h-1zM456 688h1v1h-1zM456 669h1v1h-1zM456 650h1v1h-1zM456 631h1v1h-1zM456 613h1v1h-1zM456 594h1v1h-1zM456 575h1v1h-1zM456 556h1v1h-1zM456 537h1v1h-1zM456 518h1v1h-1zM456 500h1v1h-1zM456 481h1v1h-1zM456 462h1v1h-1zM456 443h1v1h-1zM456 424h1v1h-1zM456 405h1v1h-1zM456 387h1v1h-1zM456 368h1v1h-1zM456 349h1v1h-1zM456 330h1v1h-1zM456 311h1v1h-1zM456 292h1v1h-1zM456 274h1v1h-1zM456 255h1v1h-1zM456 236h1v1h-1zM456 217h1v1h-1zM456 198h1v1h-1zM456 179h1v1h-1zM456 161h1v1h-1zM475 726h1v1h-1zM475 707h1v1h-1zM475 688h1v1h-1zM475 669h1v1h-1zM475 650h1v1h-1zM475 631h1v1h-1zM475 613h1v1h-1zM475 594h1v1h-1zM475 575h1v1h-1zM475 556h1v1h-1zM475 537h1v1h-1zM475 518h1v1h-1zM475 500h1v1h-1zM475 481h1v1h-1zM475 462h1v1h-1zM475 443h1v1h-1zM475 424h1v1h-1zM475 405h1v1h-1zM475 387h1v1h-1zM475 368h1v1h-1zM475 349h1v1h-1zM475 330h1v1h-1zM475 311h1v1h-1zM475 292h1v1h-1zM475 274h1v1h-1zM475 255h1v1h-1zM475 236h1v1h-1zM475 217h1v1h-1zM475 198h1v1h-1zM475 179h1v1h-1zM475 161h1v1h-1zM494 726h1v1h-1zM494 707h1v1h-1zM494 688h1v1h-1zM494 669h1v1h-1zM494 650h1v1h-1zM494 631h1v1h-1zM494 613h1v1h-1zM494 594h1v1h-1zM494 575h1v1h-1zM494 556h1v1h-1zM494 537h1v1h-1zM494 518h1v1h-1zM494 500h1v1h-1zM494 481h1v1h-1zM494 462h1v1h-1zM494 443h1v1h-1zM494 424h1v1h-1zM494 405h1v1h-1zM494 387h1v1h-1zM494 368h1v1h-1zM494 349h1v1h-1zM494 330h1v1h-1zM494 311h1v1h-1zM494 292h1v1h-1zM494 274h1v1h-1zM494 255h1v1h-1zM494 236h1v1h-1zM494 217h1v1h-1zM494 198h1v1h-1zM494 179h1v1h-1zM494 161h1v1h-1zM513 726h1v1h-1zM513 707h1v1h-1zM513 688h1v1h-1zM513 669h1v1h-1zM513 650h1v1h-1zM513 631h1v1h-1zM513 613h1v1h-1zM513 594h1v1h-1zM513 575h1v1h-1zM513 556h1v1h-1zM513 537h1v1h-1zM513 518h1v1h-1zM513 500h1v1h-1zM513 481h1v1h-1zM513 462h1v1h-1zM513 443h1v1h-1zM513 424h1v1h-1zM513 405h1v1h-1zM513 387h1v1h-1zM513 368h1v1h-1zM513 349h1v1h-1zM513 330h1v1h-1zM513 311h1v1h-1zM513 292h1v1h-1zM513 274h1v1h-1zM513 255h1v1h-1zM513 236h1v1h-1zM513 217h1v1h-1zM513 198h1v1h-1zM513 179h1v1h-1zM513 161h1v1h-1zM531 726h1v1h-1zM531 707h1v1h-1zM531 688h1v1h-1zM531 669h1v1h-1zM531 650h1v1h-1zM531 631h1v1h-1zM531 613h1v1h-1zM531 594h1v1h-1zM531 575h1v1h-1zM531 556h1v1h-1zM531 537h1v1h-1zM531 518h1v1h-1zM531 500h1v1h-1zM531 481h1v1h-1zM531 462h1v1h-1zM531 443h1v1h-1zM531 424h1v1h-1zM531 405h1v1h-1zM531 387h1v1h-1zM531 368h1v1h-1zM531 349h1v1h-1zM531 330h1v1h-1zM531 311h1v1h-1zM531 292h1v1h-1zM531 274h1v1h-1zM531 255h1v1h-1zM531 236h1v1h-1zM531 217h1v1h-1zM531 198h1v1h-1zM531 179h1v1h-1zM531 161h1v1h-1zM550 726h1v1h-1zM550 707h1v1h-1zM550 688h1v1h-1zM550 669h1v1h-1zM550 650h1v1h-1zM550 631h1v1h-1zM550 613h1v1h-1zM550 594h1v1h-1zM550 575h1v1h-1zM550 556h1v1h-1zM550 537h1v1h-1zM550 518h1v1h-1zM550 500h1v1h-1zM550 481h1v1h-1zM550 462h1v1h-1zM550 443h1v1h-1zM550 424h1v1h-1zM550 405h1v1h-1zM550 387h1v1h-1zM550 368h1v1h-1zM550 349h1v1h-1zM550 330h1v1h-1zM550 311h1v1h-1zM550 292h1v1h-1zM550 274h1v1h-1zM550 255h1v1h-1zM550 236h1v1h-1zM550 217h1v1h-1zM550 198h1v1h-1zM550 179h1v1h-1zM550 161h1v1h-1zM569 726h1v1h-1zM569 707h1v1h-1zM569 688h1v1h-1zM569 669h1v1h-1zM569 650h1v1h-1zM569 631h1v1h-1zM569 613h1v1h-1zM569 594h1v1h-1zM569 575h1v1h-1zM569 556h1v1h-1zM569 537h1v1h-1zM569 518h1v1h-1zM569 500h1v1h-1zM569 481h1v1h-1zM569 462h1v1h-1zM569 443h1v1h-1zM569 424h1v1h-1zM569 405h1v1h-1zM569 387h1v1h-1zM569 368h1v1h-1zM569 349h1v1h-1zM569 330h1v1h-1zM569 311h1v1h-1zM569 292h1v1h-1zM569 274h1v1h-1zM569 255h1v1h-1zM569 236h1v1h-1zM569 217h1v1h-1zM569 198h1v1h-1zM569 179h1v1h-1zM569 161h1v1h-1zM588 726h1v1h-1zM588 707h1v1h-1zM588 688h1v1h-1zM588 669h1v1h-1zM588 650h1v1h-1zM588 631h1v1h-1zM588 613h1v1h-1zM588 594h1v1h-1zM588 575h1v1h-1zM588 556h1v1h-1zM588 537h1v1h-1zM588 518h1v1h-1zM588 500h1v1h-1zM588 481h1v1h-1zM588 462h1v1h-1zM588 443h1v1h-1zM588 424h1v1h-1zM588 405h1v1h-1zM588 387h1v1h-1zM588 368h1v1h-1zM588 349h1v1h-1zM588 330h1v1h-1zM588 311h1v1h-1zM588 292h1v1h-1zM588 274h1v1h-1zM588 255h1v1h-1zM588 236h1v1h-1zM588 217h1v1h-1zM588 198h1v1h-1zM588 179h1v1h-1zM588 161h1v1h-1zM607 726h1v1h-1zM607 707h1v1h-1zM607 688h1v1h-1zM607 669h1v1h-1zM607 650h1v1h-1zM607 631h1v1h-1zM607 613h1v1h-1zM607 594h1v1h-1zM607 575h1v1h-1zM607 556h1v1h-1zM607 537h1v1h-1zM607 518h1v1h-1zM607 500h1v1h-1zM607 481h1v1h-1zM607 462h1v1h-1zM607 443h1v1h-1zM607 424h1v1h-1zM607 405h1v1h-1zM607 387h1v1h-1zM607 368h1v1h-1zM607 349h1v1h-1zM607 330h1v1h-1zM607 311h1v1h-1zM607 292h1v1h-1zM607 274h1v1h-1zM607 255h1v1h-1zM607 236h1v1h-1zM607 217h1v1h-1zM607 198h1v1h-1zM607 179h1v1h-1zM607 161h1v1h-1zM626 726h1v1h-1zM626 707h1v1h-1zM626 688h1v1h-1zM626 669h1v1h-1zM626 650h1v1h-1zM626 631h1v1h-1zM626 613h1v1h-1zM626 594h1v1h-1zM626 575h1v1h-1zM626 556h1v1h-1zM626 537h1v1h-1zM626 518h1v1h-1zM626 500h1v1h-1zM626 481h1v1h-1zM626 462h1v1h-1zM626 443h1v1h-1zM626 424h1v1h-1zM626 405h1v1h-1zM626 387h1v1h-1zM626 368h1v1h-1zM626 349h1v1h-1zM626 330h1v1h-1zM626 311h1v1h-1zM626 292h1v1h-1zM626 274h1v1h-1zM626 255h1v1h-1zM626 236h1v1h-1zM626 217h1v1h-1zM626 198h1v1h-1zM626 179h1v1h-1zM626 161h1v1h-1zM644 726h1v1h-1zM644 707h1v1h-1zM644 688h1v1h-1zM644 669h1v1h-1zM644 650h1v1h-1zM644 631h1v1h-1zM644 613h1v1h-1zM644 594h1v1h-1zM644 575h1v1h-1zM644 556h1v1h-1zM644 537h1v1h-1zM644 518h1v1h-1zM644 500h1v1h-1zM644 481h1v1h-1zM644 462h1v1h-1zM644 443h1v1h-1zM644 424h1v1h-1zM644 405h1v1h-1zM644 387h1v1h-1zM644 368h1v1h-1zM644 349h1v1h-1zM644 330h1v1h-1zM644 311h1v1h-1zM644 292h1v1h-1zM644 274h1v1h-1zM644 255h1v1h-1zM644 236h1v1h-1zM644 217h1v1h-1zM644 198h1v1h-1zM644 179h1v1h-1zM644 161h1v1h-1zM663 726h1v1h-1zM663 707h1v1h-1zM663 688h1v1h-1zM663 669h1v1h-1zM663 650h1v1h-1zM663 631h1v1h-1zM663 613h1v1h-1zM663 594h1v1h-1zM663 575h1v1h-1zM663 556h1v1h-1zM663 537h1v1h-1zM663 518h1v1h-1zM663 500h1v1h-1zM663 481h1v1h-1zM663 462h1v1h-1zM663 443h1v1h-1zM663 424h1v1h-1zM663 405h1v1h-1zM663 387h1v1h-1zM663 368h1v1h-1zM663 349h1v1h-1zM663 330h1v1h-1zM663 311h1v1h-1zM663 292h1v1h-1zM663 274h1v1h-1zM663 255h1v1h-1zM663 236h1v1h-1zM663 217h1v1h-1zM663 198h1v1h-1zM663 179h1v1h-1zM663 161h1v1h-1zM682 726h1v1h-1zM682 707h1v1h-1zM682 688h1v1h-1zM682 669h1v1h-1zM682 650h1v1h-1zM682 631h1v1h-1zM682 613h1v1h-1zM682 594h1v1h-1zM682 575h1v1h-1zM682 556h1v1h-1zM682 537h1v1h-1zM682 518h1v1h-1zM682 500h1v1h-1zM682 481h1v1h-1zM682 462h1v1h-1zM682 443h1v1h-1zM682 424h1v1h-1zM682 405h1v1h-1zM682 387h1v1h-1zM682 368h1v1h-1zM682 349h1v1h-1zM682 330h1v1h-1zM682 311h1v1h-1zM682 292h1v1h-1zM682 274h1v1h-1zM682 255h1v1h-1zM682 236h1v1h-1zM682 217h1v1h-1zM682 198h1v1h-1zM682 179h1v1h-1zM682 161h1v1h-1zM701 726h1v1h-1zM701 707h1v1h-1zM701 688h1v1h-1zM701 669h1v1h-1zM701 650h1v1h-1zM701 631h1v1h-1zM701 613h1v1h-1zM701 594h1v1h-1zM701 575h1v1h-1zM701 556h1v1h-1zM701 537h1v1h-1zM701 518h1v1h-1zM701 500h1v1h-1zM701 481h1v1h-1zM701 462h1v1h-1zM701 443h1v1h-1zM701 424h1v1h-1zM701 405h1v1h-1zM701 387h1v1h-1zM701 368h1v1h-1zM701 349h1v1h-1zM701 330h1v1h-1zM701 311h1v1h-1zM701 292h1v1h-1zM701 274h1v1h-1zM701 255h1v1h-1zM701 236h1v1h-1zM701 217h1v1h-1zM701 198h1v1h-1zM701 179h1v1h-1zM701 161h1v1h-1zM720 726h1v1h-1zM720 707h1v1h-1zM720 688h1v1h-1zM720 669h1v1h-1zM720 650h1v1h-1zM720 631h1v1h-1zM720 613h1v1h-1zM720 594h1v1h-1zM720 575h1v1h-1zM720 556h1v1h-1zM720 537h1v1h-1zM720 518h1v1h-1zM720 500h1v1h-1zM720 481h1v1h-1zM720 462h1v1h-1zM720 443h1v1h-1zM720 424h1v1h-1zM720 405h1v1h-1zM720 387h1v1h-1zM720 368h1v1h-1zM720 349h1v1h-1zM720 330h1v1h-1zM720 311h1v1h-1zM720 292h1v1h-1zM720 274h1v1h-1zM720 255h1v1h-1zM720 236h1v1h-1zM720 217h1v1h-1zM720 198h1v1h-1zM720 179h1v1h-1zM720 161h1v1h-1zM739 726h1v1h-1zM739 707h1v1h-1zM739 688h1v1h-1zM739 669h1v1h-1zM739 650h1v1h-1zM739 631h1v1h-1zM739 613h1v1h-1zM739 594h1v1h-1zM739 575h1v1h-1zM739 556h1v1h-1zM739 537h1v1h-1zM739 518h1v1h-1zM739 500h1v1h-1zM739 481h1v1h-1zM739 462h1v1h-1zM739 443h1v1h-1zM739 424h1v1h-1zM739 405h1v1h-1zM739 387h1v1h-1zM739 368h1v1h-1zM739 349h1v1h-1zM739 330h1v1h-1zM739 311h1v1h-1zM739 292h1v1h-1zM739 274h1v1h-1zM739 255h1v1h-1zM739 236h1v1h-1zM739 217h1v1h-1zM739 198h1v1h-1zM739 179h1v1h-1zM739 161h1v1h-1zM757 726h1v1h-1zM757 707h1v1h-1zM757 688h1v1h-1zM757 669h1v1h-1zM757 650h1v1h-1zM757 631h1v1h-1zM757 613h1v1h-1zM757 594h1v1h-1zM757 575h1v1h-1zM757 556h1v1h-1zM757 537h1v1h-1zM757 518h1v1h-1zM757 500h1v1h-1zM757 481h1v1h-1zM757 462h1v1h-1zM757 443h1v1h-1zM757 424h1v1h-1zM757 405h1v1h-1zM757 387h1v1h-1zM757 368h1v1h-1zM757 349h1v1h-1zM757 330h1v1h-1zM757 311h1v1h-1zM757 292h1v1h-1zM757 274h1v1h-1zM757 255h1v1h-1zM757 236h1v1h-1zM757 217h1v1h-1zM757 198h1v1h-1zM757 179h1v1h-1zM757 161h1v1h-1zM776 726h1v1h-1zM776 707h1v1h-1zM776 688h1v1h-1zM776 669h1v1h-1zM776 650h1v1h-1zM776 631h1v1h-1zM776 613h1v1h-1zM776 594h1v1h-1zM776 575h1v1h-1zM776 556h1v1h-1zM776 537h1v1h-1zM776 518h1v1h-1zM776 500h1v1h-1zM776 481h1v1h-1zM776 462h1v1h-1zM776 443h1v1h-1zM776 424h1v1h-1zM776 405h1v1h-1zM776 387h1v1h-1zM776 368h1v1h-1zM776 349h1v1h-1zM776 330h1v1h-1zM776 311h1v1h-1zM776 292h1v1h-1zM776 274h1v1h-1zM776 255h1v1h-1zM776 236h1v1h-1zM776 217h1v1h-1zM776 198h1v1h-1zM776 179h1v1h-1zM776 161h1v1h-1zM795 726h1v1h-1zM795 707h1v1h-1zM795 688h1v1h-1zM795 669h1v1h-1zM795 650h1v1h-1zM795 631h1v1h-1zM795 613h1v1h-1zM795 594h1v1h-1zM795 575h1v1h-1zM795 556h1v1h-1zM795 537h1v1h-1zM795 518h1v1h-1zM795 500h1v1h-1zM795 481h1v1h-1zM795 462h1v1h-1zM795 443h1v1h-1zM795 424h1v1h-1zM795 405h1v1h-1zM795 387h1v1h-1zM795 368h1v1h-1zM795 349h1v1h-1zM795 330h1v1h-1zM795 311h1v1h-1zM795 292h1v1h-1zM795 274h1v1h-1zM795 255h1v1h-1zM795 236h1v1h-1zM795 217h1v1h-1zM795 198h1v1h-1zM795 179h1v1h-1zM795 161h1v1h-1zM814 726h1v1h-1zM814 707h1v1h-1zM814 688h1v1h-1zM814 669h1v1h-1zM814 650h1v1h-1zM814 631h1v1h-1zM814 613h1v1h-1zM814 594h1v1h-1zM814 575h1v1h-1zM814 556h1v1h-1zM814 537h1v1h-1zM814 518h1v1h-1zM814 500h1v1h-1zM814 481h1v1h-1zM814 462h1v1h-1zM814 443h1v1h-1zM814 424h1v1h-1zM814 405h1v1h-1zM814 387h1v1h-1zM814 368h1v1h-1zM814 349h1v1h-1zM814 330h1v1h-1zM814 311h1v1h-1zM814 292h1v1h-1zM814 274h1v1h-1zM814 255h1v1h-1zM814 236h1v1h-1zM814 217h1v1h-1zM814 198h1v1h-1zM814 179h1v1h-1zM814 161h1v1h-1zM833 726h1v1h-1zM833 707h1v1h-1zM833 688h1v1h-1zM833 669h1v1h-1zM833 650h1v1h-1zM833 631h1v1h-1zM833 613h1v1h-1zM833 594h1v1h-1zM833 575h1v1h-1zM833 556h1v1h-1zM833 537h1v1h-1zM833 518h1v1h-1zM833 500h1v1h-1zM833 481h1v1h-1zM833 462h1v1h-1zM833 443h1v1h-1zM833 424h1v1h-1zM833 405h1v1h-1zM833 387h1v1h-1zM833 368h1v1h-1zM833 349h1v1h-1zM833 330h1v1h-1zM833 311h1v1h-1zM833 292h1v1h-1zM833 274h1v1h-1zM833 255h1v1h-1zM833 236h1v1h-1zM833 217h1v1h-1zM833 198h1v1h-1zM833 179h1v1h-1zM833 161h1v1h-1zM852 726h1v1h-1zM852 707h1v1h-1zM852 688h1v1h-1zM852 669h1v1h-1zM852 650h1v1h-1zM852 631h1v1h-1zM852 613h1v1h-1zM852 594h1v1h-1zM852 575h1v1h-1zM852 556h1v1h-1zM852 537h1v1h-1zM852 518h1v1h-1zM852 500h1v1h-1zM852 481h1v1h-1zM852 462h1v1h-1zM852 443h1v1h-1zM852 424h1v1h-1zM852 405h1v1h-1zM852 387h1v1h-1zM852 368h1v1h-1zM852 349h1v1h-1zM852 330h1v1h-1zM852 311h1v1h-1zM852 292h1v1h-1zM852 274h1v1h-1zM852 255h1v1h-1zM852 236h1v1h-1zM852 217h1v1h-1zM852 198h1v1h-1zM852 179h1v1h-1zM852 161h1v1h-1zM870 726h1v1h-1zM870 707h1v1h-1zM870 688h1v1h-1zM870 669h1v1h-1zM870 650h1v1h-1zM870 631h1v1h-1zM870 613h1v1h-1zM870 594h1v1h-1zM870 575h1v1h-1zM870 556h1v1h-1zM870 537h1v1h-1zM870 518h1v1h-1zM870 500h1v1h-1zM870 481h1v1h-1zM870 462h1v1h-1zM870 443h1v1h-1zM870 424h1v1h-1zM870 405h1v1h-1zM870 387h1v1h-1zM870 368h1v1h-1zM870 349h1v1h-1zM870 330h1v1h-1zM870 311h1v1h-1zM870 292h1v1h-1zM870 274h1v1h-1zM870 255h1v1h-1zM870 236h1v1h-1zM870 217h1v1h-1zM870 198h1v1h-1zM870 179h1v1h-1zM870 161h1v1h-1zM889 726h1v1h-1zM889 707h1v1h-1zM889 688h1v1h-1zM889 669h1v1h-1zM889 650h1v1h-1zM889 631h1v1h-1zM889 613h1v1h-1zM889 594h1v1h-1zM889 575h1v1h-1zM889 556h1v1h-1zM889 537h1v1h-1zM889 518h1v1h-1zM889 500h1v1h-1zM889 481h1v1h-1zM889 462h1v1h-1zM889 443h1v1h-1zM889 424h1v1h-1zM889 405h1v1h-1zM889 387h1v1h-1zM889 368h1v1h-1zM889 349h1v1h-1zM889 330h1v1h-1zM889 311h1v1h-1zM889 292h1v1h-1zM889 274h1v1h-1zM889 255h1v1h-1zM889 236h1v1h-1zM889 217h1v1h-1zM889 198h1v1h-1zM889 179h1v1h-1zM889 161h1v1h-1zM908 726h1v1h-1zM908 707h1v1h-1zM908 688h1v1h-1zM908 669h1v1h-1zM908 650h1v1h-1zM908 631h1v1h-1zM908 613h1v1h-1zM908 594h1v1h-1zM908 575h1v1h-1zM908 556h1v1h-1zM908 537h1v1h-1zM908 518h1v1h-1zM908 500h1v1h-1zM908 481h1v1h-1zM908 462h1v1h-1zM908 443h1v1h-1zM908 424h1v1h-1zM908 405h1v1h-1zM908 387h1v1h-1zM908 368h1v1h-1zM908 349h1v1h-1zM908 330h1v1h-1zM908 311h1v1h-1zM908 292h1v1h-1zM908 274h1v1h-1zM908 255h1v1h-1zM908 236h1v1h-1zM908 217h1v1h-1zM908 198h1v1h-1zM908 179h1v1h-1zM908 161h1v1h-1zM927 726h1v1h-1zM927 707h1v1h-1zM927 688h1v1h-1zM927 669h1v1h-1zM927 650h1v1h-1zM927 631h1v1h-1zM927 613h1v1h-1zM927 594h1v1h-1zM927 575h1v1h-1zM927 556h1v1h-1zM927 537h1v1h-1zM927 518h1v1h-1zM927 500h1v1h-1zM927 481h1v1h-1zM927 462h1v1h-1zM927 443h1v1h-1zM927 424h1v1h-1zM927 405h1v1h-1zM927 387h1v1h-1zM927 368h1v1h-1zM927 349h1v1h-1zM927 330h1v1h-1zM927 311h1v1h-1zM927 292h1v1h-1zM927 274h1v1h-1zM927 255h1v1h-1zM927 236h1v1h-1zM927 217h1v1h-1zM927 198h1v1h-1zM927 179h1v1h-1zM927 161h1v1h-1zM946 726h1v1h-1zM946 707h1v1h-1zM946 688h1v1h-1zM946 669h1v1h-1zM946 650h1v1h-1zM946 631h1v1h-1zM946 613h1v1h-1zM946 594h1v1h-1zM946 575h1v1h-1zM946 556h1v1h-1zM946 537h1v1h-1zM946 518h1v1h-1zM946 500h1v1h-1zM946 481h1v1h-1zM946 462h1v1h-1zM946 443h1v1h-1zM946 424h1v1h-1zM946 405h1v1h-1zM946 387h1v1h-1zM946 368h1v1h-1zM946 349h1v1h-1zM946 330h1v1h-1zM946 311h1v1h-1zM946 292h1v1h-1zM946 274h1v1h-1zM946 255h1v1h-1zM946 236h1v1h-1zM946 217h1v1h-1zM946 198h1v1h-1zM946 179h1v1h-1zM946 161h1v1h-1zM965 726h1v1h-1zM965 707h1v1h-1zM965 688h1v1h-1zM965 669h1v1h-1zM965 650h1v1h-1zM965 631h1v1h-1zM965 613h1v1h-1zM965 594h1v1h-1zM965 575h1v1h-1zM965 556h1v1h-1zM965 537h1v1h-1zM965 518h1v1h-1zM965 500h1v1h-1zM965 481h1v1h-1zM965 462h1v1h-1zM965 443h1v1h-1zM965 424h1v1h-1zM965 405h1v1h-1zM965 387h1v1h-1zM965 368h1v1h-1zM965 349h1v1h-1zM965 330h1v1h-1zM965 311h1v1h-1zM965 292h1v1h-1zM965 274h1v1h-1zM965 255h1v1h-1zM965 236h1v1h-1zM965 217h1v1h-1zM965 198h1v1h-1zM965 179h1v1h-1zM965 161h1v1h-1zM983 726h1v1h-1zM983 707h1v1h-1zM983 688h1v1h-1zM983 669h1v1h-1zM983 650h1v1h-1zM983 631h1v1h-1zM983 613h1v1h-1zM983 594h1v1h-1zM983 575h1v1h-1zM983 556h1v1h-1zM983 537h1v1h-1zM983 518h1v1h-1zM983 500h1v1h-1zM983 481h1v1h-1zM983 462h1v1h-1zM983 443h1v1h-1zM983 424h1v1h-1zM983 405h1v1h-1zM983 387h1v1h-1zM983 368h1v1h-1zM983 349h1v1h-1zM983 330h1v1h-1zM983 311h1v1h-1zM983 292h1v1h-1zM983 274h1v1h-1zM983 255h1v1h-1zM983 236h1v1h-1zM983 217h1v1h-1zM983 198h1v1h-1zM983 179h1v1h-1zM983 161h1v1h-1zM1002 726h1v1h-1zM1002 707h1v1h-1zM1002 688h1v1h-1zM1002 669h1v1h-1zM1002 650h1v1h-1zM1002 631h1v1h-1zM1002 613h1v1h-1zM1002 594h1v1h-1zM1002 575h1v1h-1zM1002 556h1v1h-1zM1002 537h1v1h-1zM1002 518h1v1h-1zM1002 500h1v1h-1zM1002 481h1v1h-1zM1002 462h1v1h-1zM1002 443h1v1h-1zM1002 424h1v1h-1zM1002 405h1v1h-1zM1002 387h1v1h-1zM1002 368h1v1h-1zM1002 349h1v1h-1zM1002 330h1v1h-1zM1002 311h1v1h-1zM1002 292h1v1h-1zM1002 274h1v1h-1zM1002 255h1v1h-1zM1002 236h1v1h-1zM1002 217h1v1h-1zM1002 198h1v1h-1zM1002 179h1v1h-1zM1002 161h1v1h-1zM1021 726h1v1h-1zM1021 707h1v1h-1zM1021 688h1v1h-1zM1021 669h1v1h-1zM1021 650h1v1h-1zM1021 631h1v1h-1zM1021 613h1v1h-1zM1021 594h1v1h-1zM1021 575h1v1h-1zM1021 556h1v1h-1zM1021 537h1v1h-1zM1021 518h1v1h-1zM1021 500h1v1h-1zM1021 481h1v1h-1zM1021 462h1v1h-1zM1021 443h1v1h-1zM1021 424h1v1h-1zM1021 405h1v1h-1zM1021 387h1v1h-1zM1021 368h1v1h-1zM1021 349h1v1h-1zM1021 330h1v1h-1zM1021 311h1v1h-1zM1021 292h1v1h-1zM1021 274h1v1h-1zM1021 255h1v1h-1zM1021 236h1v1h-1zM1021 217h1v1h-1zM1021 198h1v1h-1zM1021 179h1v1h-1zM1021 161h1v1h-1zM1040 726h1v1h-1zM1040 707h1v1h-1zM1040 688h1v1h-1zM1040 669h1v1h-1zM1040 650h1v1h-1zM1040 631h1v1h-1zM1040 613h1v1h-1zM1040 594h1v1h-1zM1040 575h1v1h-1zM1040 556h1v1h-1zM1040 537h1v1h-1zM1040 518h1v1h-1zM1040 500h1v1h-1zM1040 481h1v1h-1zM1040 462h1v1h-1zM1040 443h1v1h-1zM1040 424h1v1h-1zM1040 405h1v1h-1zM1040 387h1v1h-1zM1040 368h1v1h-1zM1040 349h1v1h-1zM1040 330h1v1h-1zM1040 311h1v1h-1zM1040 292h1v1h-1zM1040 274h1v1h-1zM1040 255h1v1h-1zM1040 236h1v1h-1zM1040 217h1v1h-1zM1040 198h1v1h-1zM1040 179h1v1h-1zM1040 161h1v1h-1zM1059 726h1v1h-1zM1059 707h1v1h-1zM1059 688h1v1h-1zM1059 669h1v1h-1zM1059 650h1v1h-1zM1059 631h1v1h-1zM1059 613h1v1h-1zM1059 594h1v1h-1zM1059 575h1v1h-1zM1059 556h1v1h-1zM1059 537h1v1h-1zM1059 518h1v1h-1zM1059 500h1v1h-1zM1059 481h1v1h-1zM1059 462h1v1h-1zM1059 443h1v1h-1zM1059 424h1v1h-1zM1059 405h1v1h-1zM1059 387h1v1h-1zM1059 368h1v1h-1zM1059 349h1v1h-1zM1059 330h1v1h-1zM1059 311h1v1h-1zM1059 292h1v1h-1zM1059 274h1v1h-1zM1059 255h1v1h-1zM1059 236h1v1h-1zM1059 217h1v1h-1zM1059 198h1v1h-1zM1059 179h1v1h-1zM1059 161h1v1h-1zM1078 726h1v1h-1zM1078 707h1v1h-1zM1078 688h1v1h-1zM1078 669h1v1h-1zM1078 650h1v1h-1zM1078 631h1v1h-1zM1078 613h1v1h-1zM1078 594h1v1h-1zM1078 575h1v1h-1zM1078 556h1v1h-1zM1078 537h1v1h-1zM1078 518h1v1h-1zM1078 500h1v1h-1zM1078 481h1v1h-1zM1078 462h1v1h-1zM1078 443h1v1h-1zM1078 424h1v1h-1zM1078 405h1v1h-1zM1078 387h1v1h-1zM1078 368h1v1h-1zM1078 349h1v1h-1zM1078 330h1v1h-1zM1078 311h1v1h-1zM1078 292h1v1h-1zM1078 274h1v1h-1zM1078 255h1v1h-1zM1078 236h1v1h-1zM1078 217h1v1h-1zM1078 198h1v1h-1zM1078 179h1v1h-1zM1078 161h1v1h-1zM1096 726h1v1h-1zM1096 707h1v1h-1zM1096 688h1v1h-1zM1096 669h1v1h-1zM1096 650h1v1h-1zM1096 631h1v1h-1zM1096 613h1v1h-1zM1096 594h1v1h-1zM1096 575h1v1h-1zM1096 556h1v1h-1zM1096 537h1v1h-1zM1096 518h1v1h-1zM1096 500h1v1h-1zM1096 481h1v1h-1zM1096 462h1v1h-1zM1096 443h1v1h-1zM1096 424h1v1h-1zM1096 405h1v1h-1zM1096 387h1v1h-1zM1096 368h1v1h-1zM1096 349h1v1h-1zM1096 330h1v1h-1zM1096 311h1v1h-1zM1096 292h1v1h-1zM1096 274h1v1h-1zM1096 255h1v1h-1zM1096 236h1v1h-1zM1096 217h1v1h-1zM1096 198h1v1h-1zM1096 179h1v1h-1zM1096 161h1v1h-1zM1115 726h1v1h-1zM1115 707h1v1h-1zM1115 688h1v1h-1zM1115 669h1v1h-1zM1115 650h1v1h-1zM1115 631h1v1h-1zM1115 613h1v1h-1zM1115 594h1v1h-1zM1115 575h1v1h-1zM1115 556h1v1h-1zM1115 537h1v1h-1zM1115 518h1v1h-1zM1115 500h1v1h-1zM1115 481h1v1h-1zM1115 462h1v1h-1zM1115 443h1v1h-1zM1115 424h1v1h-1zM1115 405h1v1h-1zM1115 387h1v1h-1zM1115 368h1v1h-1zM1115 349h1v1h-1zM1115 330h1v1h-1zM1115 311h1v1h-1zM1115 292h1v1h-1zM1115 274h1v1h-1zM1115 255h1v1h-1zM1115 236h1v1h-1zM1115 217h1v1h-1zM1115 198h1v1h-1zM1115 179h1v1h-1zM1115 161h1v1h-1z" fill="#444"/>
<g stroke="#b00000" stroke-width="1.2" fill="none"><line x1="397.5" y1="631.5" x2="439.5" y2="631.5"/><line x1="418.5" y1="611.5" x2="418.5" y2="652.5"/><circle cx="418.5" cy="631.5" r="5.3"/></g>
<circle cx="606.7" cy="443.1" r="188.3" fill="none" stroke="#cfcfcf" stroke-width="1"/>
<circle cx="606.7" cy="443.1" r="169.5" fill="none" stroke="#cfcfcf" stroke-width="1"/>
<path d="M662.7 331.4L670.3 323.4" stroke="#7a3636" stroke-width="3.4"/><rect x="669.5" y="322.2" width="3.7" height="30.5" fill="#7a3636"/>
<text x="712.4" y="397.4" style="font-family:&quot;Liberation Sans&quot;" font-size="43" fill="#7a3636" text-anchor="middle">2</text>
<text x="728.7" y="458.4" style="font-family:&quot;Liberation Sans&quot;" font-size="43" fill="#7a3636" text-anchor="middle">3</text>
<text x="712.4" y="519.4" style="font-family:&quot;Liberation Sans&quot;" font-size="43" fill="#7a3636" text-anchor="middle">4</text>
<text x="667.7" y="564.0" style="font-family:&quot;Liberation Sans&quot;" font-size="43" fill="#7a3636" text-anchor="middle">5</text>
<text x="606.7" y="580.4" style="font-family:&quot;Liberation Sans&quot;" font-size="43" fill="#7a3636" text-anchor="middle">6</text>
<text x="545.7" y="564.0" style="font-family:&quot;Liberation Sans&quot;" font-size="43" fill="#7a3636" text-anchor="middle">7</text>
<text x="501.1" y="519.4" style="font-family:&quot;Liberation Sans&quot;" font-size="43" fill="#7a3636" text-anchor="middle">8</text>
<text x="484.7" y="458.4" style="font-family:&quot;Liberation Sans&quot;" font-size="43" fill="#7a3636" text-anchor="middle">9</text>
<path d="M481.6 376.1L489.2 368.1" stroke="#7a3636" stroke-width="3.4"/><rect x="488.3" y="366.9" width="3.7" height="30.5" fill="#7a3636"/>
<text x="511.3" y="397.4" style="font-family:&quot;Liberation Sans&quot;" font-size="43" fill="#7a3636" text-anchor="middle">0</text>
<path d="M530.5 331.4L538.1 323.4" stroke="#7a3636" stroke-width="3.4"/><rect x="537.3" y="322.2" width="3.7" height="30.5" fill="#7a3636"/>
<path d="M550.9 331.4L558.5 323.4" stroke="#7a3636" stroke-width="3.4"/><rect x="557.7" y="322.2" width="3.7" height="30.5" fill="#7a3636"/>
<path d="M587.2 315.1L594.8 307.1" stroke="#7a3636" stroke-width="3.4"/><rect x="594.0" y="305.9" width="3.7" height="30.5" fill="#7a3636"/>
<text x="616.9" y="336.4" style="font-family:&quot;Liberation Sans&quot;" font-size="43" fill="#7a3636" text-anchor="middle">2</text>
<polygon points="764.7,443.1 763.9,426.6 761.3,410.2 757.0,394.2 751.1,378.8 743.6,364.1 734.6,350.2 724.1,337.3 712.5,325.7 699.6,315.2 685.7,306.2 671.0,298.7 655.6,292.8 639.6,288.5 623.2,285.9 606.7,285.1 590.2,285.9 573.9,288.5 557.9,292.8 542.5,298.7 527.7,306.2 513.9,315.2 501.0,325.7 489.3,337.3 478.9,350.2 469.9,364.1 462.4,378.8 456.5,394.2 452.2,410.2 449.6,426.6 448.7,443.1 449.6,459.6 452.2,475.9 456.5,491.9 462.4,507.3 469.9,522.1 478.9,535.9 489.3,548.8 501.0,560.5 513.9,570.9 527.7,579.9 542.5,587.4 557.9,593.3 573.9,597.6 590.2,600.2 606.7,601.1 623.2,600.2 639.6,597.6 655.6,593.3 671.0,587.4 685.7,579.9 699.6,570.9 712.5,560.5 724.1,548.8 734.6,535.9 743.6,522.1 751.1,507.3 757.0,491.9 761.3,475.9 763.9,459.6" fill="none" stroke="#6a2828" stroke-width="1"/>
<polygon points="753.3,443.1 752.5,427.7 750.1,412.6 746.2,397.8 740.7,383.4 733.7,369.8 725.3,356.9 715.7,345.0 704.8,334.1 692.9,324.5 680.0,316.1 666.4,309.1 652.0,303.6 637.2,299.7 622.1,297.3 606.7,296.5 591.4,297.3 576.3,299.7 561.4,303.6 547.1,309.1 533.4,316.1 520.6,324.5 508.6,334.1 497.8,345.0 488.1,356.9 479.8,369.8 472.8,383.4 467.3,397.8 463.3,412.6 460.9,427.7 460.1,443.1 460.9,458.4 463.3,473.5 467.3,488.4 472.8,502.7 479.8,516.4 488.1,529.2 497.8,541.2 508.6,552.0 520.6,561.7 533.4,570.0 547.1,577.0 561.4,582.5 576.3,586.5 591.4,588.9 606.7,589.7 622.1,588.9 637.2,586.5 652.0,582.5 666.4,577.0 680.0,570.0 692.9,561.7 704.8,552.0 715.7,541.2 725.3,529.2 733.7,516.4 740.7,502.7 746.2,488.4 750.1,473.5 752.5,458.4" fill="none" stroke="#6a2828" stroke-width="1"/>
<g stroke="#8080b0" stroke-width="0.8"><rect x="602.0" y="370.0" width="9.4" height="9.4" fill="#0000a8"/><rect x="609.2" y="370.3" width="9.4" height="9.4" fill="#0000a8"/><rect x="616.3" y="371.5" width="9.4" height="9.4" fill="#0000a8"/><rect x="623.2" y="373.3" width="9.4" height="9.4" fill="#0000a8"/><rect x="629.9" y="375.9" width="9.4" height="9.4" fill="#0000a8"/><rect x="636.2" y="379.1" width="9.4" height="9.4" fill="#0000a8"/><rect x="642.2" y="383.0" width="9.4" height="9.4" fill="#0000a8"/><rect x="647.8" y="387.5" width="9.4" height="9.4" fill="#0000a8"/><rect x="652.9" y="392.6" width="9.4" height="9.4" fill="#0000a8"/><rect x="657.4" y="398.2" width="9.4" height="9.4" fill="#0000a8"/><rect x="661.3" y="404.2" width="9.4" height="9.4" fill="#0000a8"/><rect x="664.5" y="410.5" width="9.4" height="9.4" fill="#0000a8"/><rect x="667.1" y="417.2" width="9.4" height="9.4" fill="#0000a8"/><rect x="668.9" y="424.1" width="9.4" height="9.4" fill="#0000a8"/><rect x="670.1" y="431.2" width="9.4" height="9.4" fill="#0000a8"/><rect x="670.4" y="438.4" width="9.4" height="9.4" fill="#0000a8"/><rect x="670.1" y="445.5" width="9.4" height="9.4" fill="#0000a8"/><rect x="668.9" y="452.6" width="9.4" height="9.4" fill="#0000a8"/><rect x="667.1" y="459.5" width="9.4" height="9.4" fill="#0000a8"/><rect x="664.5" y="466.2" width="9.4" height="9.4" fill="#0000a8"/><rect x="661.3" y="472.6" width="9.4" height="9.4" fill="#0000a8"/><rect x="657.4" y="478.6" width="9.4" height="9.4" fill="#0000a8"/><rect x="652.9" y="484.1" width="9.4" height="9.4" fill="#0000a8"/><rect x="647.8" y="489.2" width="9.4" height="9.4" fill="#0000a8"/><rect x="642.2" y="493.7" width="9.4" height="9.4" fill="#0000a8"/><rect x="636.2" y="497.6" width="9.4" height="9.4" fill="#0000a8"/><rect x="629.9" y="500.9" width="9.4" height="9.4" fill="#0000a8"/><rect x="623.2" y="503.4" width="9.4" height="9.4" fill="#0000a8"/><rect x="616.3" y="505.3" width="9.4" height="9.4" fill="#0000a8"/><rect x="609.2" y="506.4" width="9.4" height="9.4" fill="#0000a8"/><rect x="602.0" y="506.8" width="9.4" height="9.4" fill="#0000a8"/><rect x="594.9" y="506.4" width="9.4" height="9.4" fill="#0000a8"/><rect x="587.8" y="505.3" width="9.4" height="9.4" fill="#0000a8"/><rect x="580.9" y="503.4" width="9.4" height="9.4" fill="#0000a8"/><rect x="574.2" y="500.9" width="9.4" height="9.4" fill="#0000a8"/><rect x="567.8" y="497.6" width="9.4" height="9.4" fill="#0000a8"/><rect x="561.8" y="493.7" width="9.4" height="9.4" fill="#0000a8"/><rect x="556.3" y="489.2" width="9.4" height="9.4" fill="#0000a8"/><rect x="551.2" y="484.1" width="9.4" height="9.4" fill="#0000a8"/><rect x="546.7" y="478.6" width="9.4" height="9.4" fill="#0000a8"/><rect x="542.8" y="472.6" width="9.4" height="9.4" fill="#0000a8"/><rect x="539.5" y="466.2" width="9.4" height="9.4" fill="#0000a8"/><rect x="537.0" y="459.5" width="9.4" height="9.4" fill="#0000a8"/><rect x="535.1" y="452.6" width="9.4" height="9.4" fill="#0000a8"/><rect x="534.0" y="445.5" width="9.4" height="9.4" fill="#0000a8"/><rect x="533.6" y="438.4" width="9.4" height="9.4" fill="#0000a8"/><rect x="534.0" y="431.2" width="9.4" height="9.4" fill="#0000a8"/><rect x="535.1" y="424.1" width="9.4" height="9.4" fill="#0000a8"/><rect x="537.0" y="417.2" width="9.4" height="9.4" fill="#0000a8"/><rect x="539.5" y="410.5" width="9.4" height="9.4" fill="#0000a8"/><rect x="542.8" y="404.2" width="9.4" height="9.4" fill="#0000a8"/><rect x="546.7" y="398.2" width="9.4" height="9.4" fill="#0000a8"/><rect x="551.2" y="392.6" width="9.4" height="9.4" fill="#0000a8"/><rect x="556.3" y="387.5" width="9.4" height="9.4" fill="#0000a8"/><rect x="561.8" y="383.0" width="9.4" height="9.4" fill="#0000a8"/><rect x="567.8" y="379.1" width="9.4" height="9.4" fill="#0000a8"/><rect x="574.2" y="375.9" width="9.4" height="9.4" fill="#0000a8"/><rect x="580.9" y="373.3" width="9.4" height="9.4" fill="#0000a8"/><rect x="587.8" y="371.5" width="9.4" height="9.4" fill="#0000a8"/><rect x="594.9" y="370.3" width="9.4" height="9.4" fill="#0000a8"/><rect x="602.0" y="381.4" width="9.4" height="9.4" fill="#c4001e"/><rect x="608.0" y="381.7" width="9.4" height="9.4" fill="#c4001e"/><rect x="613.9" y="382.6" width="9.4" height="9.4" fill="#c4001e"/><rect x="619.6" y="384.2" width="9.4" height="9.4" fill="#c4001e"/><rect x="625.2" y="386.3" width="9.4" height="9.4" fill="#c4001e"/><rect x="630.5" y="389.0" width="9.4" height="9.4" fill="#c4001e"/><rect x="635.5" y="392.3" width="9.4" height="9.4" fill="#c4001e"/><rect x="640.2" y="396.0" width="9.4" height="9.4" fill="#c4001e"/><rect x="644.4" y="400.2" width="9.4" height="9.4" fill="#c4001e"/><rect x="648.1" y="404.9" width="9.4" height="9.4" fill="#c4001e"/><rect x="651.4" y="409.9" width="9.4" height="9.4" fill="#c4001e"/><rect x="654.1" y="415.2" width="9.4" height="9.4" fill="#c4001e"/><rect x="656.2" y="420.8" width="9.4" height="9.4" fill="#c4001e"/><rect x="657.8" y="426.5" width="9.4" height="9.4" fill="#c4001e"/><rect x="658.7" y="432.4" width="9.4" height="9.4" fill="#c4001e"/><rect x="659.0" y="438.4" width="9.4" height="9.4" fill="#c4001e"/><rect x="658.7" y="444.3" width="9.4" height="9.4" fill="#c4001e"/><rect x="657.8" y="450.2" width="9.4" height="9.4" fill="#c4001e"/><rect x="656.2" y="456.0" width="9.4" height="9.4" fill="#c4001e"/><rect x="654.1" y="461.6" width="9.4" height="9.4" fill="#c4001e"/><rect x="651.4" y="466.9" width="9.4" height="9.4" fill="#c4001e"/><rect x="648.1" y="471.9" width="9.4" height="9.4" fill="#c4001e"/><rect x="644.4" y="476.5" width="9.4" height="9.4" fill="#c4001e"/><rect x="640.2" y="480.7" width="9.4" height="9.4" fill="#c4001e"/><rect x="635.5" y="484.5" width="9.4" height="9.4" fill="#c4001e"/><rect x="630.5" y="487.7" width="9.4" height="9.4" fill="#c4001e"/><rect x="625.2" y="490.4" width="9.4" height="9.4" fill="#c4001e"/><rect x="619.6" y="492.6" width="9.4" height="9.4" fill="#c4001e"/><rect x="613.9" y="494.1" width="9.4" height="9.4" fill="#c4001e"/><rect x="608.0" y="495.1" width="9.4" height="9.4" fill="#c4001e"/><rect x="602.0" y="495.4" width="9.4" height="9.4" fill="#c4001e"/><rect x="596.1" y="495.1" width="9.4" height="9.4" fill="#c4001e"/><rect x="590.2" y="494.1" width="9.4" height="9.4" fill="#c4001e"/><rect x="584.4" y="492.6" width="9.4" height="9.4" fill="#c4001e"/><rect x="578.8" y="490.4" width="9.4" height="9.4" fill="#c4001e"/><rect x="573.5" y="487.7" width="9.4" height="9.4" fill="#c4001e"/><rect x="568.5" y="484.5" width="9.4" height="9.4" fill="#c4001e"/><rect x="563.9" y="480.7" width="9.4" height="9.4" fill="#c4001e"/><rect x="559.7" y="476.5" width="9.4" height="9.4" fill="#c4001e"/><rect x="555.9" y="471.9" width="9.4" height="9.4" fill="#c4001e"/><rect x="552.7" y="466.9" width="9.4" height="9.4" fill="#c4001e"/><rect x="550.0" y="461.6" width="9.4" height="9.4" fill="#c4001e"/><rect x="547.8" y="456.0" width="9.4" height="9.4" fill="#c4001e"/><rect x="546.3" y="450.2" width="9.4" height="9.4" fill="#c4001e"/><rect x="545.3" y="444.3" width="9.4" height="9.4" fill="#c4001e"/><rect x="545.0" y="438.4" width="9.4" height="9.4" fill="#c4001e"/><rect x="545.3" y="432.4" width="9.4" height="9.4" fill="#c4001e"/><rect x="546.3" y="426.5" width="9.4" height="9.4" fill="#c4001e"/><rect x="547.8" y="420.8" width="9.4" height="9.4" fill="#c4001e"/><rect x="550.0" y="415.2" width="9.4" height="9.4" fill="#c4001e"/><rect x="552.7" y="409.9" width="9.4" height="9.4" fill="#c4001e"/><rect x="555.9" y="404.9" width="9.4" height="9.4" fill="#c4001e"/><rect x="559.7" y="400.2" width="9.4" height="9.4" fill="#c4001e"/><rect x="563.9" y="396.0" width="9.4" height="9.4" fill="#c4001e"/><rect x="568.5" y="392.3" width="9.4" height="9.4" fill="#c4001e"/><rect x="573.5" y="389.0" width="9.4" height="9.4" fill="#c4001e"/><rect x="578.8" y="386.3" width="9.4" height="9.4" fill="#c4001e"/><rect x="584.4" y="384.2" width="9.4" height="9.4" fill="#c4001e"/><rect x="590.2" y="382.6" width="9.4" height="9.4" fill="#c4001e"/><rect x="596.1" y="381.7" width="9.4" height="9.4" fill="#c4001e"/><rect x="602.0" y="276.3" width="9.4" height="9.4" fill="#0000a8"/><rect x="606.6" y="286.1" width="9.4" height="9.4" fill="#0000a8"/><rect x="597.4" y="286.1" width="9.4" height="9.4" fill="#0000a8"/><rect x="602.0" y="295.9" width="9.4" height="9.4" fill="#0000a8"/><rect x="618.5" y="281.2" width="9.4" height="9.4" fill="#0000a8"/><rect x="617.4" y="292.6" width="9.4" height="9.4" fill="#c4001e"/><rect x="634.9" y="283.8" width="9.4" height="9.4" fill="#0000a8"/><rect x="632.5" y="295.0" width="9.4" height="9.4" fill="#c4001e"/><rect x="650.9" y="288.1" width="9.4" height="9.4" fill="#0000a8"/><rect x="647.3" y="298.9" width="9.4" height="9.4" fill="#c4001e"/><rect x="666.3" y="294.0" width="9.4" height="9.4" fill="#0000a8"/><rect x="661.7" y="304.4" width="9.4" height="9.4" fill="#c4001e"/><rect x="683.1" y="298.0" width="9.4" height="9.4" fill="#0000a8"/><rect x="682.2" y="308.8" width="9.4" height="9.4" fill="#0000a8"/><rect x="674.2" y="304.2" width="9.4" height="9.4" fill="#0000a8"/><rect x="673.3" y="315.0" width="9.4" height="9.4" fill="#0000a8"/><rect x="694.9" y="310.5" width="9.4" height="9.4" fill="#0000a8"/><rect x="688.2" y="319.8" width="9.4" height="9.4" fill="#c4001e"/><rect x="707.8" y="321.0" width="9.4" height="9.4" fill="#0000a8"/><rect x="700.1" y="329.4" width="9.4" height="9.4" fill="#c4001e"/><rect x="719.4" y="332.6" width="9.4" height="9.4" fill="#0000a8"/><rect x="711.0" y="340.3" width="9.4" height="9.4" fill="#c4001e"/><rect x="729.9" y="345.5" width="9.4" height="9.4" fill="#0000a8"/><rect x="720.6" y="352.2" width="9.4" height="9.4" fill="#c4001e"/><rect x="742.4" y="357.3" width="9.4" height="9.4" fill="#0000a8"/><rect x="736.2" y="366.2" width="9.4" height="9.4" fill="#0000a8"/><rect x="731.6" y="358.2" width="9.4" height="9.4" fill="#0000a8"/><rect x="725.4" y="367.1" width="9.4" height="9.4" fill="#0000a8"/><rect x="746.4" y="374.1" width="9.4" height="9.4" fill="#0000a8"/><rect x="736.0" y="378.7" width="9.4" height="9.4" fill="#c4001e"/><rect x="752.3" y="389.5" width="9.4" height="9.4" fill="#0000a8"/><rect x="741.5" y="393.1" width="9.4" height="9.4" fill="#c4001e"/><rect x="756.6" y="405.5" width="9.4" height="9.4" fill="#0000a8"/><rect x="745.4" y="407.9" width="9.4" height="9.4" fill="#c4001e"/><rect x="759.2" y="421.9" width="9.4" height="9.4" fill="#0000a8"/><rect x="747.8" y="423.0" width="9.4" height="9.4" fill="#c4001e"/><rect x="764.1" y="438.4" width="9.4" height="9.4" fill="#0000a8"/><rect x="754.3" y="443.0" width="9.4" height="9.4" fill="#0000a8"/><rect x="754.3" y="433.8" width="9.4" height="9.4" fill="#0000a8"/><rect x="744.5" y="438.4" width="9.4" height="9.4" fill="#0000a8"/><rect x="759.2" y="454.9" width="9.4" height="9.4" fill="#0000a8"/><rect x="747.8" y="453.7" width="9.4" height="9.4" fill="#c4001e"/><rect x="756.6" y="471.2" width="9.4" height="9.4" fill="#0000a8"/><rect x="745.4" y="468.8" width="9.4" height="9.4" fill="#c4001e"/><rect x="752.3" y="487.2" width="9.4" height="9.4" fill="#0000a8"/><rect x="741.5" y="483.7" width="9.4" height="9.4" fill="#c4001e"/><rect x="746.4" y="502.6" width="9.4" height="9.4" fill="#0000a8"/><rect x="736.0" y="498.0" width="9.4" height="9.4" fill="#c4001e"/><rect x="742.4" y="519.4" width="9.4" height="9.4" fill="#0000a8"/><rect x="731.6" y="518.5" width="9.4" height="9.4" fill="#0000a8"/><rect x="736.2" y="510.5" width="9.4" height="9.4" fill="#0000a8"/><rect x="725.4" y="509.6" width="9.4" height="9.4" fill="#0000a8"/><rect x="729.9" y="531.2" width="9.4" height="9.4" fill="#0000a8"/><rect x="720.6" y="524.5" width="9.4" height="9.4" fill="#c4001e"/><rect x="719.4" y="544.1" width="9.4" height="9.4" fill="#0000a8"/><rect x="711.0" y="536.5" width="9.4" height="9.4" fill="#c4001e"/><rect x="707.8" y="555.8" width="9.4" height="9.4" fill="#0000a8"/><rect x="700.1" y="547.3" width="9.4" height="9.4" fill="#c4001e"/><rect x="694.9" y="566.2" width="9.4" height="9.4" fill="#0000a8"/><rect x="688.2" y="557.0" width="9.4" height="9.4" fill="#c4001e"/><rect x="683.1" y="578.8" width="9.4" height="9.4" fill="#0000a8"/><rect x="674.2" y="572.6" width="9.4" height="9.4" fill="#0000a8"/><rect x="682.2" y="568.0" width="9.4" height="9.4" fill="#0000a8"/><rect x="673.3" y="561.8" width="9.4" height="9.4" fill="#0000a8"/><rect x="666.3" y="582.7" width="9.4" height="9.4" fill="#0000a8"/><rect x="661.7" y="572.3" width="9.4" height="9.4" fill="#c4001e"/><rect x="650.9" y="588.6" width="9.4" height="9.4" fill="#0000a8"/><rect x="647.3" y="577.8" width="9.4" height="9.4" fill="#c4001e"/><rect x="634.9" y="592.9" width="9.4" height="9.4" fill="#0000a8"/><rect x="632.5" y="581.8" width="9.4" height="9.4" fill="#c4001e"/><rect x="618.5" y="595.5" width="9.4" height="9.4" fill="#0000a8"/><rect x="617.4" y="584.2" width="9.4" height="9.4" fill="#c4001e"/><rect x="602.0" y="600.5" width="9.4" height="9.4" fill="#0000a8"/><rect x="597.4" y="590.7" width="9.4" height="9.4" fill="#0000a8"/><rect x="606.6" y="590.7" width="9.4" height="9.4" fill="#0000a8"/><rect x="602.0" y="580.9" width="9.4" height="9.4" fill="#0000a8"/><rect x="585.5" y="595.5" width="9.4" height="9.4" fill="#0000a8"/><rect x="586.7" y="584.2" width="9.4" height="9.4" fill="#c4001e"/><rect x="569.2" y="592.9" width="9.4" height="9.4" fill="#0000a8"/><rect x="571.6" y="581.8" width="9.4" height="9.4" fill="#c4001e"/><rect x="553.2" y="588.6" width="9.4" height="9.4" fill="#0000a8"/><rect x="556.7" y="577.8" width="9.4" height="9.4" fill="#c4001e"/><rect x="537.8" y="582.7" width="9.4" height="9.4" fill="#0000a8"/><rect x="542.4" y="572.3" width="9.4" height="9.4" fill="#c4001e"/><rect x="521.0" y="578.8" width="9.4" height="9.4" fill="#0000a8"/><rect x="521.9" y="568.0" width="9.4" height="9.4" fill="#0000a8"/><rect x="529.9" y="572.6" width="9.4" height="9.4" fill="#0000a8"/><rect x="530.8" y="561.8" width="9.4" height="9.4" fill="#0000a8"/><rect x="509.2" y="566.2" width="9.4" height="9.4" fill="#0000a8"/><rect x="515.9" y="557.0" width="9.4" height="9.4" fill="#c4001e"/><rect x="496.3" y="555.8" width="9.4" height="9.4" fill="#0000a8"/><rect x="503.9" y="547.3" width="9.4" height="9.4" fill="#c4001e"/><rect x="484.6" y="544.1" width="9.4" height="9.4" fill="#0000a8"/><rect x="493.1" y="536.5" width="9.4" height="9.4" fill="#c4001e"/><rect x="474.2" y="531.2" width="9.4" height="9.4" fill="#0000a8"/><rect x="483.4" y="524.5" width="9.4" height="9.4" fill="#c4001e"/><rect x="461.6" y="519.4" width="9.4" height="9.4" fill="#0000a8"/><rect x="467.8" y="510.5" width="9.4" height="9.4" fill="#0000a8"/><rect x="472.4" y="518.5" width="9.4" height="9.4" fill="#0000a8"/><rect x="478.6" y="509.6" width="9.4" height="9.4" fill="#0000a8"/><rect x="457.7" y="502.6" width="9.4" height="9.4" fill="#0000a8"/><rect x="468.1" y="498.0" width="9.4" height="9.4" fill="#c4001e"/><rect x="451.8" y="487.2" width="9.4" height="9.4" fill="#0000a8"/><rect x="462.6" y="483.7" width="9.4" height="9.4" fill="#c4001e"/><rect x="447.5" y="471.2" width="9.4" height="9.4" fill="#0000a8"/><rect x="458.6" y="468.8" width="9.4" height="9.4" fill="#c4001e"/><rect x="444.9" y="454.9" width="9.4" height="9.4" fill="#0000a8"/><rect x="456.2" y="453.7" width="9.4" height="9.4" fill="#c4001e"/><rect x="439.9" y="438.4" width="9.4" height="9.4" fill="#0000a8"/><rect x="449.7" y="433.8" width="9.4" height="9.4" fill="#0000a8"/><rect x="449.7" y="443.0" width="9.4" height="9.4" fill="#0000a8"/><rect x="459.5" y="438.4" width="9.4" height="9.4" fill="#0000a8"/><rect x="444.9" y="421.9" width="9.4" height="9.4" fill="#0000a8"/><rect x="456.2" y="423.0" width="9.4" height="9.4" fill="#c4001e"/><rect x="447.5" y="405.5" width="9.4" height="9.4" fill="#0000a8"/><rect x="458.6" y="407.9" width="9.4" height="9.4" fill="#c4001e"/><rect x="451.8" y="389.5" width="9.4" height="9.4" fill="#0000a8"/><rect x="462.6" y="393.1" width="9.4" height="9.4" fill="#c4001e"/><rect x="457.7" y="374.1" width="9.4" height="9.4" fill="#0000a8"/><rect x="468.1" y="378.7" width="9.4" height="9.4" fill="#c4001e"/><rect x="461.6" y="357.3" width="9.4" height="9.4" fill="#0000a8"/><rect x="472.4" y="358.2" width="9.4" height="9.4" fill="#0000a8"/><rect x="467.8" y="366.2" width="9.4" height="9.4" fill="#0000a8"/><rect x="478.6" y="367.1" width="9.4" height="9.4" fill="#0000a8"/><rect x="474.2" y="345.5" width="9.4" height="9.4" fill="#0000a8"/><rect x="483.4" y="352.2" width="9.4" height="9.4" fill="#c4001e"/><rect x="484.6" y="332.6" width="9.4" height="9.4" fill="#0000a8"/><rect x="493.1" y="340.3" width="9.4" height="9.4" fill="#c4001e"/><rect x="496.3" y="321.0" width="9.4" height="9.4" fill="#0000a8"/><rect x="503.9" y="329.4" width="9.4" height="9.4" fill="#c4001e"/><rect x="509.2" y="310.5" width="9.4" height="9.4" fill="#0000a8"/><rect x="515.9" y="319.8" width="9.4" height="9.4" fill="#c4001e"/><rect x="521.0" y="298.0" width="9.4" height="9.4" fill="#0000a8"/><rect x="529.9" y="304.2" width="9.4" height="9.4" fill="#0000a8"/><rect x="521.9" y="308.8" width="9.4" height="9.4" fill="#0000a8"/><rect x="530.8" y="315.0" width="9.4" height="9.4" fill="#0000a8"/><rect x="537.8" y="294.0" width="9.4" height="9.4" fill="#0000a8"/><rect x="542.4" y="304.4" width="9.4" height="9.4" fill="#c4001e"/><rect x="553.2" y="288.1" width="9.4" height="9.4" fill="#0000a8"/><rect x="556.7" y="298.9" width="9.4" height="9.4" fill="#c4001e"/><rect x="569.2" y="283.8" width="9.4" height="9.4" fill="#0000a8"/><rect x="571.6" y="295.0" width="9.4" height="9.4" fill="#c4001e"/><rect x="585.5" y="281.2" width="9.4" height="9.4" fill="#0000a8"/><rect x="586.7" y="292.6" width="9.4" height="9.4" fill="#c4001e"/><rect x="663.0" y="332.7" width="9.4" height="9.4" fill="#0000a8"/><rect x="707.7" y="377.4" width="9.4" height="9.4" fill="#0000a8"/><rect x="724.0" y="438.4" width="9.4" height="9.4" fill="#0000a8"/><rect x="707.7" y="499.4" width="9.4" height="9.4" fill="#0000a8"/><rect x="663.0" y="544.0" width="9.4" height="9.4" fill="#0000a8"/><rect x="602.0" y="560.4" width="9.4" height="9.4" fill="#0000a8"/><rect x="541.0" y="544.0" width="9.4" height="9.4" fill="#0000a8"/><rect x="496.4" y="499.4" width="9.4" height="9.4" fill="#0000a8"/><rect x="480.0" y="438.4" width="9.4" height="9.4" fill="#0000a8"/><rect x="496.4" y="377.4" width="9.4" height="9.4" fill="#0000a8"/><rect x="541.0" y="332.7" width="9.4" height="9.4" fill="#0000a8"/><rect x="602.0" y="316.4" width="9.4" height="9.4" fill="#0000a8"/><rect x="602.0" y="433.8" width="9.4" height="9.4" fill="#1a8cb4"/><rect x="597.4" y="438.4" width="9.4" height="9.4" fill="#1a8cb4"/><rect x="606.6" y="438.4" width="9.4" height="9.4" fill="#1a8cb4"/><rect x="602.0" y="443.0" width="9.4" height="9.4" fill="#1a8cb4"/></g>
</svg>
<svg class="a" style="left:71px;top:131px" width="1062" height="24" viewBox="71 131 1062 24">
<path d="M98.5 152v3M117.5 148v7M136.5 152v3M155.5 148v7M174.5 152v3M192.5 148v7M211.5 152v3M230.5 148v7M249.5 152v3M268.5 148v7M287.5 152v3M305.5 148v7M324.5 152v3M343.5 148v7M362.5 152v3M381.5 148v7M400.5 152v3M418.5 148v7M437.5 152v3M456.5 148v7M475.5 152v3M494.5 148v7M513.5 152v3M531.5 148v7M550.5 152v3M569.5 148v7M588.5 152v3M607.5 148v7M626.5 152v3M644.5 148v7M663.5 152v3M682.5 148v7M701.5 152v3M720.5 148v7M739.5 152v3M757.5 148v7M776.5 152v3M795.5 148v7M814.5 152v3M833.5 148v7M852.5 152v3M870.5 148v7M889.5 152v3M908.5 148v7M927.5 152v3M946.5 148v7M965.5 152v3M983.5 148v7M1002.5 152v3M1021.5 148v7M1040.5 152v3M1059.5 148v7M1078.5 152v3M1096.5 148v7M1115.5 152v3" stroke="#555" stroke-width="1"/>
<g style="font-family:&quot;Liberation Sans&quot;" font-size="9.6" fill="#1a1a1a"><text x="117.5" y="141" text-anchor="middle">-160</text><text x="155.5" y="141" text-anchor="middle">-140</text><text x="192.5" y="141" text-anchor="middle">-120</text><text x="230.5" y="141" text-anchor="middle">-100</text><text x="268.5" y="141" text-anchor="middle">-80</text><text x="305.5" y="141" text-anchor="middle">-60</text><text x="343.5" y="141" text-anchor="middle">-40</text><text x="381.5" y="141" text-anchor="middle">-20</text><text x="418.5" y="141" text-anchor="middle">0</text><text x="456.5" y="141" text-anchor="middle">20</text><text x="494.5" y="141" text-anchor="middle">40</text><text x="531.5" y="141" text-anchor="middle">60</text><text x="569.5" y="141" text-anchor="middle">80</text><text x="607.5" y="141" text-anchor="middle">100</text><text x="644.5" y="141" text-anchor="middle">120</text><text x="682.5" y="141" text-anchor="middle">140</text><text x="720.5" y="141" text-anchor="middle">160</text><text x="757.5" y="141" text-anchor="middle">180</text><text x="795.5" y="141" text-anchor="middle">200</text><text x="833.5" y="141" text-anchor="middle">220</text><text x="870.5" y="141" text-anchor="middle">240</text><text x="908.5" y="141" text-anchor="middle">260</text><text x="946.5" y="141" text-anchor="middle">280</text><text x="983.5" y="141" text-anchor="middle">300</text><text x="1021.5" y="141" text-anchor="middle">320</text><text x="1059.5" y="141" text-anchor="middle">340</text><text x="1096.5" y="141" text-anchor="middle">360</text></g>
<path d="M960.0 145L971.0 145L965.5 151Z" fill="#000"/>
</svg>
<svg class="a" style="left:71px;top:155px" width="24" height="577" viewBox="71 155 24 577">
<path d="M92 726.5h3M88 707.5h7M92 688.5h3M88 669.5h7M92 650.5h3M88 631.5h7M92 613.5h3M88 594.5h7M92 575.5h3M88 556.5h7M92 537.5h3M88 518.5h7M92 500.5h3M88 481.5h7M92 462.5h3M88 443.5h7M92 424.5h3M88 405.5h7M92 387.5h3M88 368.5h7M92 349.5h3M88 330.5h7M92 311.5h3M88 292.5h7M92 274.5h3M88 255.5h7M92 236.5h3M88 217.5h7M92 198.5h3M88 179.5h7M92 161.5h3" stroke="#555" stroke-width="1"/>
<g style="font-family:&quot;Liberation Sans&quot;" font-size="9.6" fill="#1a1a1a"><text transform="translate(82 707.5) rotate(-90)" text-anchor="middle">-40</text><text transform="translate(82 669.5) rotate(-90)" text-anchor="middle">-20</text><text transform="translate(82 631.5) rotate(-90)" text-anchor="middle">0</text><text transform="translate(82 594.5) rotate(-90)" text-anchor="middle">20</text><text transform="translate(82 556.5) rotate(-90)" text-anchor="middle">40</text><text transform="translate(82 518.5) rotate(-90)" text-anchor="middle">60</text><text transform="translate(82 481.5) rotate(-90)" text-anchor="middle">80</text><text transform="translate(82 443.5) rotate(-90)" text-anchor="middle">100</text><text transform="translate(82 405.5) rotate(-90)" text-anchor="middle">120</text><text transform="translate(82 368.5) rotate(-90)" text-anchor="middle">140</text><text transform="translate(82 330.5) rotate(-90)" text-anchor="middle">160</text><text transform="translate(82 292.5) rotate(-90)" text-anchor="middle">180</text><text transform="translate(82 255.5) rotate(-90)" text-anchor="middle">200</text><text transform="translate(82 217.5) rotate(-90)" text-anchor="middle">220</text><text transform="translate(82 179.5) rotate(-90)" text-anchor="middle">240</text></g>
<path d="M85 539.0L85 550.0L91 544.5Z" fill="#000"/>
</svg>
<div class="a" style="left:1118px;top:155px;width:15px;height:593px;background:#f8f8f8"></div>
<div class="a" style="left:1123px;top:303px;width:8px;height:279px;border-radius:4px;background:#000"></div>
<div class="a" style="left:95px;top:732px;width:968px;height:16px;background:#f8f8f8"></div>
<div class="a" style="left:161px;top:737px;width:836px;height:8px;border-radius:4px;background:#808080"></div>
<div class="a" style="left:1063px;top:732px;width:70px;height:16px;background:#ececec"></div>
<div class="t" style="right:367px;top:734.5px;font-size:12.6px;color:#111">10 &lt; 100</div>
<div class="a" style="left:1133px;top:108px;width:11px;height:690px;background:#ebebeb"></div>
<div class="a" style="left:1144px;top:108px;width:11px;height:690px;background:#e3e3e3"></div>
<div class="a" style="left:1135px;top:320px;width:20px;height:156px;background:#1d82fa;border-radius:5px 0 0 5px"></div>
<div class="t" style="left:1145px;top:398px;font-size:13.3px;color:#fff;transform:translate(-50%,-50%) rotate(-90deg)">Editor de propiedades</div>
<div class="a" style="left:1135px;top:480px;width:20px;height:110px;background:#d7d7d7;border-radius:5px 0 0 5px"></div>
<div class="t" style="left:1145px;top:535px;font-size:13.3px;color:#333;transform:translate(-50%,-50%) rotate(-90deg)">Lista de capas</div>
<div class="a" style="left:71px;top:748px;width:1062px;height:2px;background:#c4c4c4"></div>
<div class="a" style="left:71px;top:750px;width:1062px;height:20px;background:#fff"></div>
<div class="a" style="left:71px;top:770px;width:1062px;height:1px;background:#bdbdbd"></div>
<div class="a" style="left:71px;top:771px;width:1062px;height:27px;background:#ececec"></div>
<div class="t" style="left:77px;top:752px;font-size:13px;color:#1a1ae6"><i>Comando:</i> line</div>
<div class="t" style="left:73px;top:779px;font-size:13px;color:#111">Comando:</div>
<div class="a" style="left:138px;top:776px;width:969px;height:18px;background:#fff"></div>
<div class="a" style="left:1107px;top:772px;width:26px;height:26px;background:linear-gradient(#ececec,#f8f8f8);border:1px solid #b4b4b4"></div>
<svg class="a" style="left:1107px;top:772px" width="26" height="26"><rect x="6.5" y="10.5" width="13" height="9" fill="#fff" stroke="#222" stroke-width="1"/><rect x="6" y="10" width="14" height="2.5" fill="#000"/></svg>
<div class="a" style="left:1155px;top:108px;width:300px;height:690px;background:#ebebeb;border-left:1px solid #d0d0d0"></div>
<div class="a" style="left:1156px;top:108px;width:299px;height:22px;background:linear-gradient(#e6e6e6,#dadada);border-bottom:1px solid #c8c8c8"></div>
<div class="t" style="left:1264px;top:113px;font-size:12px;color:#2a2a2a">Editor de propiedades</div>
<svg class="a" style="left:1156px;top:110px" width="40" height="18"><circle cx="8" cy="8" r="7" fill="#6b6b6b"/><path d="M5.2 5.2L10.8 10.8M10.8 5.2L5.2 10.8" stroke="#eee" stroke-width="1.8" stroke-linecap="round"/><circle cx="26" cy="8" r="7" fill="#6b6b6b"/><rect x="22.3" y="7.3" width="5.4" height="4" fill="none" stroke="#eee" stroke-width="1.1"/><path d="M24.3 7.3V5h5.2v4h-1.8" fill="none" stroke="#eee" stroke-width="1.1"/></svg>
<div class="t" style="left:1168.5px;top:148px;font-size:13.4px;color:#1a1a1a">Selección:</div>
<div class="a" style="left:1238.5px;top:143.5px;width:203px;height:21px;border-radius:6px;background:#fff;border:1px solid #cfd6df;border-bottom-color:#c0c8d2"></div>
<div class="t" style="left:1242px;top:148px;font-size:13.4px;color:#111">Todos (149)</div>
<div class="a" style="left:1423px;top:146px;width:16px;height:16px;border-radius:4px;background:#1a78f4"></div><svg class="a" style="left:1423px;top:146px" width="16" height="16"><path d="M5.0 6.2L8.0 3.4L11.0 6.2M5.0 9.8L8.0 12.6L11.0 9.8" fill="none" stroke="#fff" stroke-width="1.4" stroke-linecap="round" stroke-linejoin="round"/></svg>
<div class="a" style="left:1168px;top:166px;width:274px;height:204px;background:#eac4c4"></div>
<div class="a" style="left:1167px;top:160px;width:2px;height:216px;background:linear-gradient(rgba(240,110,110,0),#f07a7a 8px,#f07a7a 208px,rgba(240,110,110,0))"></div>
<div class="a" style="left:1441px;top:160px;width:2px;height:216px;background:linear-gradient(rgba(240,110,110,0),#f07a7a 8px,#f07a7a 208px,rgba(240,110,110,0))"></div>
<div class="a" style="left:1159px;top:165px;width:296px;height:2px;background:linear-gradient(90deg,rgba(240,110,110,0),#f07a7a 10px,#f07a7a 286px,rgba(240,110,110,0))"></div>
<div class="a" style="left:1159px;top:369px;width:296px;height:2px;background:linear-gradient(90deg,rgba(240,110,110,0),#f07a7a 10px,#f07a7a 286px,rgba(240,110,110,0))"></div>
<div class="t" style="left:1175px;top:171.5px;font-size:11.8px;color:#2a1a1a">Propiedades generales</div>
<div class="a" style="left:1171px;top:183px;width:268px;height:184px;border-radius:5px 5px 0 0;background:#e6bfbf;border-top:1px solid #dcb4b4"></div>
<div class="t" style="right:216px;top:200px;font-size:13px;color:#2a1a1a">Capa:</div>
<div class="t" style="right:216px;top:226px;font-size:13px;color:#2a1a1a">Color:</div>
<div class="t" style="right:216px;top:250px;font-size:13px;color:#2a1a1a">Grosor de la línea:</div>
<div class="t" style="right:216px;top:274px;font-size:13px;color:#2a1a1a">Tipo de línea:</div>
<div class="t" style="right:216px;top:297.5px;font-size:13px;color:#2a1a1a">Escala de tipo:</div>
<div class="t" style="right:216px;top:320.5px;font-size:13px;color:#2a1a1a">Orden de dibujo:</div>
<div class="t" style="right:216px;top:343.5px;font-size:13px;color:#2a1a1a">Handle:</div>
<div class="a" style="left:1288px;top:196px;width:116px;height:20px;border-radius:5px;background:#fdd6d6;box-shadow:0 0.5px 1px rgba(120,60,60,0.35)"></div>
<div class="a" style="left:1386px;top:198px;width:16px;height:16px;border-radius:4px;background:#2b6fd8"></div><svg class="a" style="left:1386px;top:198px" width="16" height="16"><path d="M5.0 6.2L8.0 3.4L11.0 6.2M5.0 9.8L8.0 12.6L11.0 9.8" fill="none" stroke="#fff" stroke-width="1.4" stroke-linecap="round" stroke-linejoin="round"/></svg>
<div class="a" style="left:1407px;top:193px;width:26px;height:26px;background:#ecc8c8;border:1px solid #bfa3a3"></div>
<svg class="a" style="left:1407px;top:193px" width="26" height="26"><path d="M7 8.5h12M7 13h12M7 17.5h12" stroke="#8a6a6a" stroke-width="1.6"/></svg>
<div class="a" style="left:1291px;top:201.5px;width:16px;height:10px;border:1px solid #2a2a2a"></div>
<div class="t" style="left:1313.5px;top:200.5px;font-size:13px;color:#1a1a1a">0</div>
<div class="a" style="left:1288px;top:222px;width:144px;height:20px;border-radius:5px;background:#fdd6d6;box-shadow:0 0.5px 1px rgba(120,60,60,0.35)"></div>
<div class="a" style="left:1414px;top:224px;width:16px;height:16px;border-radius:4px;background:#2b6fd8"></div><svg class="a" style="left:1414px;top:224px" width="16" height="16"><path d="M5.0 6.2L8.0 3.4L11.0 6.2M5.0 9.8L8.0 12.6L11.0 9.8" fill="none" stroke="#fff" stroke-width="1.4" stroke-linecap="round" stroke-linejoin="round"/></svg>
<div class="a" style="left:1291px;top:227.5px;width:16px;height:10px;border:1px solid #2a2a2a"></div>
<div class="t" style="left:1313.5px;top:226.5px;font-size:13px;color:#1a1a1a">Por Capa</div>
<div class="a" style="left:1288px;top:246px;width:144px;height:20px;border-radius:5px;background:#fdd6d6;box-shadow:0 0.5px 1px rgba(120,60,60,0.35)"></div>
<div class="a" style="left:1414px;top:248px;width:16px;height:16px;border-radius:4px;background:#2b6fd8"></div><svg class="a" style="left:1414px;top:248px" width="16" height="16"><path d="M5.0 6.2L8.0 3.4L11.0 6.2M5.0 9.8L8.0 12.6L11.0 9.8" fill="none" stroke="#fff" stroke-width="1.4" stroke-linecap="round" stroke-linejoin="round"/></svg>
<div class="a" style="left:1291px;top:256px;width:16px;height:1px;background:#2a2a2a"></div>
<div class="t" style="left:1313.5px;top:250.5px;font-size:13px;color:#1a1a1a">Por Capa</div>
<div class="a" style="left:1288px;top:270px;width:144px;height:20px;border-radius:5px;background:#fdd6d6;box-shadow:0 0.5px 1px rgba(120,60,60,0.35)"></div>
<div class="a" style="left:1414px;top:272px;width:16px;height:16px;border-radius:4px;background:#2b6fd8"></div><svg class="a" style="left:1414px;top:272px" width="16" height="16"><path d="M5.0 6.2L8.0 3.4L11.0 6.2M5.0 9.8L8.0 12.6L11.0 9.8" fill="none" stroke="#fff" stroke-width="1.4" stroke-linecap="round" stroke-linejoin="round"/></svg>
<div class="t" style="left:1291px;top:273.5px;font-size:13px;color:#1a1a1a">Por Capa</div>
<div class="a" style="left:1288px;top:294px;width:144px;height:19px;background:#fdd6d6;border-bottom:1px solid #d4aaaa"></div>
<div class="a" style="left:1288px;top:317px;width:144px;height:19px;background:#fdd6d6;border-bottom:1px solid #d4aaaa"></div>
<div class="a" style="left:1288px;top:340px;width:144px;height:19px;background:#fdd6d6;border-bottom:1px solid #d4aaaa"></div>
<div class="t" style="left:1290px;top:298px;font-size:13px;color:#7a6a6a">1</div>
<div class="t" style="left:1290px;top:321px;font-size:13px;color:#1a1a1a">*VARIA*</div>
<div class="t" style="left:1290px;top:344px;font-size:13px;color:#c0a8a8">*VARIA*</div>
<div class="t" style="left:1175px;top:374.5px;font-size:11.8px;color:#1a1a1a">Propiedades específicas</div>
<div class="a" style="left:1168px;top:387px;width:274px;height:18px;border-radius:5px;background:#e4e4e4;border:1px solid #dddddd"></div>
<div class="t" style="left:1175px;top:411.5px;font-size:11.8px;color:#1a1a1a">Personalizado</div>
<div class="a" style="left:1168px;top:424px;width:274px;height:52px;border-radius:5px;background:#e4e4e4;border:1px solid #dddddd"></div>
<div class="a" style="left:1405px;top:440px;width:22px;height:22px;background:linear-gradient(#fafafa,#ececec);border:1px solid #c4c4c4"></div>
<svg class="a" style="left:1405px;top:440px" width="22" height="22"><path d="M11 6.5v9M6.5 11h9" stroke="#c00000" stroke-width="2.2"/></svg>
<svg class="a" style="left:1255px;top:218px" width="100" height="100"><defs><filter id="bl"><feGaussianBlur stdDeviation="1.2"/></filter></defs><circle cx="50" cy="50" r="36.5" fill="none" stroke="rgba(110,130,175,0.45)" stroke-width="6" filter="url(#bl)"/></svg>
<svg class="a" style="left:1298px;top:261px" width="30" height="40"><g transform="translate(7.1 6.7)"><path d="M0 0L0 22.5L5 17.8L9.6 27.6L13.6 25.9L9.2 16.4L15.6 15.8Z" fill="#fff" stroke="#000" stroke-width="1.4" stroke-linejoin="round"/></g></svg>
<div class="a" style="left:1455px;top:108px;width:45px;height:690px;background:linear-gradient(90deg,#ececec,#d0d0d0)"></div>
<svg class="a" style="left:1455px;top:108px" width="45" height="400" viewBox="1455 108 45 400"><rect x="1463" y="116" width="2" height="2" fill="#a8a8a8"/><rect x="1469" y="116" width="2" height="2" fill="#a8a8a8"/><rect x="1475" y="116" width="2" height="2" fill="#a8a8a8"/><rect x="1481" y="116" width="2" height="2" fill="#a8a8a8"/><rect x="1487" y="116" width="2" height="2" fill="#a8a8a8"/><rect x="1456" y="120" width="43" height="43" rx="6" fill="#b8b8b8"/><rect x="1456" y="269.5" width="43" height="42" rx="6" fill="#b8b8b8"/><rect x="1456" y="418.5" width="43" height="42" rx="6" fill="#b8b8b8"/><line x1="1458" y1="261.5" x2="1500" y2="261.5" stroke="#666" stroke-dasharray="1 2"/><line x1="1458" y1="411.5" x2="1500" y2="411.5" stroke="#666" stroke-dasharray="1 2"/><rect x="1463.5" y="127.5" width="27.5" height="27.5" fill="#fff" stroke="#333" stroke-width="0.9"/><rect x="1463" y="127" width="28.5" height="4.2" fill="#000"/><rect x="1463.9" y="127.9" width="3" height="3" fill="#fff"/><path d="M1470 149L1472 138L1484 135L1482 146Z" fill="#ddd" stroke="#444" stroke-width="0.8"/><path d="M1473 147L1475 137L1485 134.5L1483 144.5Z" fill="#eee" stroke="#444" stroke-width="0.8"/><path d="M1478 145L1483 137" stroke="#e02020" stroke-width="1"/><rect x="1463.5" y="174.5" width="27.5" height="27.5" fill="#fff" stroke="#333" stroke-width="0.9"/><rect x="1463" y="174" width="28.5" height="4.2" fill="#000"/><rect x="1463.9" y="174.9" width="3" height="3" fill="#fff"/><rect x="1470.5" y="183.5" width="10" height="8" fill="#fdf0c4" stroke="#555" stroke-width="0.8"/><circle cx="1480" cy="192" r="5" fill="#fdf0c4" stroke="#555" stroke-width="0.8"/><rect x="1463.5" y="220.5" width="27.5" height="27.5" fill="#fff" stroke="#333" stroke-width="0.9"/><rect x="1463" y="220" width="28.5" height="4.2" fill="#000"/><rect x="1463.9" y="220.9" width="3" height="3" fill="#fff"/><rect x="1469.5" y="229.5" width="15" height="11" rx="2" fill="#f2f2f6" stroke="#b8c4dc" stroke-width="0.8"/><rect x="1463.5" y="276.5" width="27.5" height="27.5" fill="#fff" stroke="#333" stroke-width="0.9"/><rect x="1463" y="276" width="28.5" height="4.2" fill="#000"/><rect x="1463.9" y="276.9" width="3" height="3" fill="#fff"/><rect x="1467.5" y="283" width="3.5" height="3" fill="#000"/><rect x="1474.5" y="282.5" width="12" height="3.5" fill="#fff" stroke="#333" stroke-width="0.7"/><rect x="1467.5" y="289" width="3.5" height="3" fill="#000"/><rect x="1474.5" y="288.5" width="12" height="3.5" fill="#fff" stroke="#333" stroke-width="0.7"/><rect x="1467.5" y="295" width="3.5" height="3" fill="#000"/><rect x="1474.5" y="294.5" width="12" height="3.5" fill="#fff" stroke="#333" stroke-width="0.7"/><rect x="1463.5" y="323.5" width="27.5" height="27.5" fill="#fff" stroke="#333" stroke-width="0.9"/><rect x="1463" y="323" width="28.5" height="4.2" fill="#000"/><rect x="1463.9" y="323.9" width="3" height="3" fill="#fff"/><path d="M1469 333H1485L1479 340V347L1475 345V340Z" fill="#aaa" stroke="#333" stroke-width="0.8"/><rect x="1463.5" y="369.5" width="27.5" height="27.5" fill="#fff" stroke="#333" stroke-width="0.9"/><rect x="1463" y="369" width="28.5" height="4.2" fill="#000"/><rect x="1463.9" y="369.9" width="3" height="3" fill="#fff"/><path d="M1468 375V393L1473 388V380Z" fill="#fff" stroke="#333" stroke-width="0.8"/><rect x="1473" y="380" width="10" height="8" fill="#888" stroke="#444" stroke-width="0.6"/><line x1="1467" y1="384" x2="1487" y2="384" stroke="#f08080" stroke-width="0.7"/><rect x="1463.5" y="425.5" width="27.5" height="27.5" fill="#fff" stroke="#333" stroke-width="0.9"/><rect x="1463" y="425" width="28.5" height="4.2" fill="#000"/><rect x="1463.9" y="425.9" width="3" height="3" fill="#fff"/><line x1="1466" y1="433" x2="1480" y2="433" stroke="#888" stroke-width="0.8"/><line x1="1466" y1="436" x2="1480" y2="436" stroke="#888" stroke-width="0.8"/><line x1="1466" y1="439" x2="1480" y2="439" stroke="#888" stroke-width="0.8"/><line x1="1466" y1="442" x2="1480" y2="442" stroke="#888" stroke-width="0.8"/><rect x="1464" y="447.5" width="26" height="3.5" fill="#fff" stroke="#444" stroke-width="0.6"/><line x1="1471" y1="449.5" x2="1487" y2="449.5" stroke="#555" stroke-width="0.8"/><rect x="1463.5" y="472.5" width="27.5" height="27.5" fill="#fff" stroke="#333" stroke-width="0.9"/><rect x="1463" y="472" width="28.5" height="4.2" fill="#000"/><rect x="1463.9" y="472.9" width="3" height="3" fill="#fff"/><rect x="1470.5" y="481" width="14" height="15" rx="1" fill="#c08a2a"/><rect x="1472" y="483" width="11" height="11.5" fill="#f4f4f4"/><rect x="1474" y="479.5" width="7" height="3" fill="#888"/></svg>
<div class="a" style="left:0;top:798px;width:1500px;height:46px;background:#dcdcdc"></div>
<div class="t" style="left:2px;top:808.5px;font-size:10.2px;color:#1a1a1a">289.8922,46.6177</div>
<div class="t" style="left:2px;top:828.5px;font-size:10.2px;color:#1a1a1a">@289.8922,46.6177</div>
<div class="a" style="left:253px;top:802px;width:1px;height:40px;background:#9a9a9a"></div>
<div class="t" style="left:256px;top:808.5px;font-size:10.2px;color:#1a1a1a">293.6166&lt;9°</div>
<div class="t" style="left:256px;top:828.5px;font-size:10.2px;color:#1a1a1a">@293.6166&lt;9°</div>
<div class="a" style="left:506.5px;top:818.5px;width:6px;height:6px;border-radius:3px;background:#c8c8c8"></div>
<div class="t" style="right:801.6px;top:811.5px;font-size:10.2px;color:#1a1a1a;text-align:right">Seleccionar entidad o región</div>
<div class="t" style="right:801.6px;top:822.5px;font-size:10.2px;color:#1a1a1a;text-align:right">Mover entidad o referencia</div>
<svg class="a" style="left:716px;top:805px" width="20" height="32"><path d="M10 1.2C4.8 1.2 1.5 4.5 1.5 10V22C1.5 27.5 4.8 30.8 10 30.8C15.2 30.8 18.5 27.5 18.5 22V10C18.5 4.5 15.2 1.2 10 1.2Z" fill="#fff" stroke="#333" stroke-width="1"/><path d="M1.5 14.5H18.5M10 1.2V14.5" stroke="#333" stroke-width="0.9"/><rect x="8.3" y="4" width="3.4" height="6.5" rx="1.7" fill="#fff" stroke="#333" stroke-width="0.9"/></svg>
<div class="a" style="left:940.3px;top:818px;width:6px;height:6px;border-radius:3px;background:#c8c8c8"></div>
<div class="t" style="left:949.2px;top:811.5px;font-size:10.2px;color:#1a1a1a">Las entidades seleccionadas:</div>
<div class="t" style="left:949.2px;top:822.5px;font-size:10.2px;color:#1a1a1a">149 entidades en capa "0".</div>
<div class="a" style="left:1269.3px;top:818.8px;width:6px;height:6px;border-radius:3px;background:#c8c8c8"></div>
</body></html>
